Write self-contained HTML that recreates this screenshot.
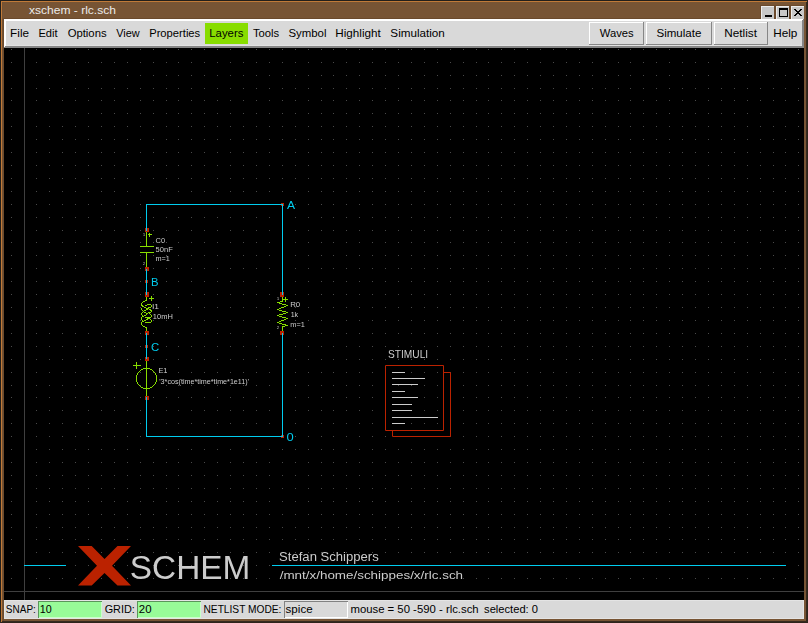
<!DOCTYPE html>
<html><head><meta charset="utf-8"><title>xschem - rlc.sch</title>
<style>html,body{margin:0;padding:0;background:#000;overflow:hidden}
svg{display:block} text{font-family:"Liberation Sans",sans-serif;white-space:pre}
rect{shape-rendering:crispEdges}</style></head>
<body><svg width="808" height="623" viewBox="0 0 808 623"><defs><filter id="gs" x="0" y="0" width="1" height="1"><feOffset dx="0" dy="0"/></filter></defs><rect x="0" y="0" width="808" height="623" fill="#775434"/><rect x="0" y="0" width="808" height="1" fill="#231f1b"/><rect x="0" y="0" width="1" height="623" fill="#231f1b"/><rect x="806" y="0" width="1" height="623" fill="#362a1f"/><rect x="807" y="0" width="1" height="623" fill="#2e241b"/><rect x="0" y="621" width="808" height="1" fill="#362a1f"/><rect x="0" y="622" width="808" height="1" fill="#2e241b"/><rect x="1" y="1" width="806" height="1" fill="#c07a38"/><rect x="1" y="1" width="1" height="621" fill="#c07a38"/><rect x="2" y="2" width="1" height="619" fill="#735234"/><rect x="3" y="18" width="801" height="1" fill="#6b4a2c"/><rect x="3" y="18" width="1" height="603" fill="#6b4a2c"/><text x="28.96" y="14" font-size="11" textLength="87.02" lengthAdjust="spacingAndGlyphs" fill="#ebebeb">xschem - rlc.sch</text><rect x="760" y="5" width="44" height="1" fill="#6b4a2c"/><rect x="761" y="6" width="13" height="14" fill="#c8c8c8"/><rect x="761" y="6" width="13" height="1" fill="#ececec"/><rect x="761" y="6" width="1" height="14" fill="#ececec"/><rect x="760" y="5" width="1" height="14" fill="#6b4a2c"/><rect x="776" y="6" width="13" height="14" fill="#c8c8c8"/><rect x="776" y="6" width="13" height="1" fill="#ececec"/><rect x="776" y="6" width="1" height="14" fill="#ececec"/><rect x="775" y="5" width="1" height="14" fill="#6b4a2c"/><rect x="791" y="6" width="13" height="14" fill="#c8c8c8"/><rect x="791" y="6" width="13" height="1" fill="#ececec"/><rect x="791" y="6" width="1" height="14" fill="#ececec"/><rect x="790" y="5" width="1" height="14" fill="#6b4a2c"/><rect x="774" y="6" width="1" height="13" fill="#6b4a2c"/><rect x="789" y="6" width="1" height="13" fill="#6b4a2c"/><rect x="765" y="15" width="7" height="2" fill="#000"/><rect x="779" y="8" width="9" height="2" fill="#000"/><rect x="779" y="8" width="1" height="9" fill="#000"/><rect x="787" y="8" width="1" height="9" fill="#000"/><rect x="779" y="16" width="9" height="1" fill="#000"/><path d="M794,9h1v1h-1zM794,15h1v1h-1zM795,9h1v1h-1zM795,10h1v1h-1zM795,14h1v1h-1zM795,15h1v1h-1zM796,10h1v1h-1zM796,11h1v1h-1zM796,13h1v1h-1zM796,14h1v1h-1zM797,11h1v1h-1zM797,12h1v1h-1zM797,13h1v1h-1zM798,11h1v1h-1zM798,12h1v1h-1zM798,13h1v1h-1zM799,10h1v1h-1zM799,11h1v1h-1zM799,13h1v1h-1zM799,14h1v1h-1zM800,9h1v1h-1zM800,10h1v1h-1zM800,14h1v1h-1zM800,15h1v1h-1zM801,9h1v1h-1zM801,15h1v1h-1z" fill="#000"/><rect x="4" y="19" width="800" height="29" fill="#d9d9d9"/><rect x="4" y="19" width="800" height="1" fill="#ffffff"/><rect x="4" y="20" width="800" height="1" fill="#ffffff"/><rect x="4" y="19" width="1" height="29" fill="#ffffff"/><rect x="5" y="19" width="1" height="28" fill="#ffffff"/><rect x="6" y="45" width="798" height="1" fill="#e2e2e2"/><rect x="5" y="46" width="799" height="1" fill="#868686"/><rect x="4" y="47" width="800" height="1" fill="#868686"/><rect x="802" y="20" width="1" height="28" fill="#868686"/><rect x="803" y="19" width="1" height="29" fill="#868686"/><rect x="205" y="23" width="43" height="21" fill="#88dd00"/><text x="10.14" y="37" font-size="11.6" textLength="18.88" lengthAdjust="spacingAndGlyphs" fill="#000">File</text><text x="38.49" y="37" font-size="11.6" textLength="19.09" lengthAdjust="spacingAndGlyphs" fill="#000">Edit</text><text x="67.66" y="37" font-size="11.6" textLength="38.94" lengthAdjust="spacingAndGlyphs" fill="#000">Options</text><text x="116.15" y="37" font-size="11.6" textLength="23.42" lengthAdjust="spacingAndGlyphs" fill="#000">View</text><text x="149.18" y="37" font-size="11.6" textLength="51.02" lengthAdjust="spacingAndGlyphs" fill="#000">Properties</text><text x="209.27" y="37" font-size="11.6" textLength="34.14" lengthAdjust="spacingAndGlyphs" fill="#000">Layers</text><text x="252.96" y="37" font-size="11.6" textLength="26.23" lengthAdjust="spacingAndGlyphs" fill="#000">Tools</text><text x="288.38" y="37" font-size="11.6" textLength="38.08" lengthAdjust="spacingAndGlyphs" fill="#000">Symbol</text><text x="335.34" y="37" font-size="11.6" textLength="45.44" lengthAdjust="spacingAndGlyphs" fill="#000">Highlight</text><text x="390.37" y="37" font-size="11.6" textLength="54.49" lengthAdjust="spacingAndGlyphs" fill="#000">Simulation</text><rect x="589" y="22" width="55" height="23" fill="#d9d9d9"/><rect x="589" y="22" width="55" height="1" fill="#ffffff"/><rect x="589" y="22" width="1" height="23" fill="#ffffff"/><rect x="589" y="44" width="55" height="1" fill="#868686"/><rect x="643" y="22" width="1" height="23" fill="#868686"/><text x="599.85" y="37" font-size="11.6" textLength="33.85" lengthAdjust="spacingAndGlyphs" fill="#000">Waves</text><rect x="646" y="22" width="66" height="23" fill="#d9d9d9"/><rect x="646" y="22" width="66" height="1" fill="#ffffff"/><rect x="646" y="22" width="1" height="23" fill="#ffffff"/><rect x="646" y="44" width="66" height="1" fill="#868686"/><rect x="711" y="22" width="1" height="23" fill="#868686"/><text x="656.48" y="37" font-size="11.6" textLength="44.94" lengthAdjust="spacingAndGlyphs" fill="#000">Simulate</text><rect x="714" y="22" width="54" height="23" fill="#d9d9d9"/><rect x="714" y="22" width="54" height="1" fill="#ffffff"/><rect x="714" y="22" width="1" height="23" fill="#ffffff"/><rect x="714" y="44" width="54" height="1" fill="#868686"/><rect x="767" y="22" width="1" height="23" fill="#868686"/><text x="724.34" y="37" font-size="11.6" textLength="32.65" lengthAdjust="spacingAndGlyphs" fill="#000">Netlist</text><text x="773.24" y="37" font-size="11.6" textLength="24.16" lengthAdjust="spacingAndGlyphs" fill="#000">Help</text><rect x="4" y="48" width="800" height="552" fill="#000"/><path d="M11,591h1v1h-1zM11,578h1v1h-1zM11,565h1v1h-1zM11,552h1v1h-1zM11,539h1v1h-1zM11,527h1v1h-1zM11,514h1v1h-1zM11,501h1v1h-1zM11,488h1v1h-1zM11,475h1v1h-1zM11,462h1v1h-1zM11,449h1v1h-1zM11,436h1v1h-1zM11,423h1v1h-1zM11,410h1v1h-1zM11,397h1v1h-1zM11,385h1v1h-1zM11,372h1v1h-1zM11,359h1v1h-1zM11,346h1v1h-1zM11,333h1v1h-1zM11,320h1v1h-1zM11,307h1v1h-1zM11,294h1v1h-1zM11,281h1v1h-1zM11,268h1v1h-1zM11,255h1v1h-1zM11,242h1v1h-1zM11,230h1v1h-1zM11,217h1v1h-1zM11,204h1v1h-1zM11,191h1v1h-1zM11,178h1v1h-1zM11,165h1v1h-1zM11,152h1v1h-1zM11,139h1v1h-1zM11,126h1v1h-1zM11,113h1v1h-1zM11,100h1v1h-1zM11,88h1v1h-1zM11,75h1v1h-1zM11,62h1v1h-1zM11,49h1v1h-1zM24,591h1v1h-1zM24,578h1v1h-1zM24,565h1v1h-1zM24,552h1v1h-1zM24,539h1v1h-1zM24,527h1v1h-1zM24,514h1v1h-1zM24,501h1v1h-1zM24,488h1v1h-1zM24,475h1v1h-1zM24,462h1v1h-1zM24,449h1v1h-1zM24,436h1v1h-1zM24,423h1v1h-1zM24,410h1v1h-1zM24,397h1v1h-1zM24,385h1v1h-1zM24,372h1v1h-1zM24,359h1v1h-1zM24,346h1v1h-1zM24,333h1v1h-1zM24,320h1v1h-1zM24,307h1v1h-1zM24,294h1v1h-1zM24,281h1v1h-1zM24,268h1v1h-1zM24,255h1v1h-1zM24,242h1v1h-1zM24,230h1v1h-1zM24,217h1v1h-1zM24,204h1v1h-1zM24,191h1v1h-1zM24,178h1v1h-1zM24,165h1v1h-1zM24,152h1v1h-1zM24,139h1v1h-1zM24,126h1v1h-1zM24,113h1v1h-1zM24,100h1v1h-1zM24,88h1v1h-1zM24,75h1v1h-1zM24,62h1v1h-1zM24,49h1v1h-1zM36,591h1v1h-1zM36,578h1v1h-1zM36,565h1v1h-1zM36,552h1v1h-1zM36,539h1v1h-1zM36,527h1v1h-1zM36,514h1v1h-1zM36,501h1v1h-1zM36,488h1v1h-1zM36,475h1v1h-1zM36,462h1v1h-1zM36,449h1v1h-1zM36,436h1v1h-1zM36,423h1v1h-1zM36,410h1v1h-1zM36,397h1v1h-1zM36,385h1v1h-1zM36,372h1v1h-1zM36,359h1v1h-1zM36,346h1v1h-1zM36,333h1v1h-1zM36,320h1v1h-1zM36,307h1v1h-1zM36,294h1v1h-1zM36,281h1v1h-1zM36,268h1v1h-1zM36,255h1v1h-1zM36,242h1v1h-1zM36,230h1v1h-1zM36,217h1v1h-1zM36,204h1v1h-1zM36,191h1v1h-1zM36,178h1v1h-1zM36,165h1v1h-1zM36,152h1v1h-1zM36,139h1v1h-1zM36,126h1v1h-1zM36,113h1v1h-1zM36,100h1v1h-1zM36,88h1v1h-1zM36,75h1v1h-1zM36,62h1v1h-1zM36,49h1v1h-1zM49,591h1v1h-1zM49,578h1v1h-1zM49,565h1v1h-1zM49,552h1v1h-1zM49,539h1v1h-1zM49,527h1v1h-1zM49,514h1v1h-1zM49,501h1v1h-1zM49,488h1v1h-1zM49,475h1v1h-1zM49,462h1v1h-1zM49,449h1v1h-1zM49,436h1v1h-1zM49,423h1v1h-1zM49,410h1v1h-1zM49,397h1v1h-1zM49,385h1v1h-1zM49,372h1v1h-1zM49,359h1v1h-1zM49,346h1v1h-1zM49,333h1v1h-1zM49,320h1v1h-1zM49,307h1v1h-1zM49,294h1v1h-1zM49,281h1v1h-1zM49,268h1v1h-1zM49,255h1v1h-1zM49,242h1v1h-1zM49,230h1v1h-1zM49,217h1v1h-1zM49,204h1v1h-1zM49,191h1v1h-1zM49,178h1v1h-1zM49,165h1v1h-1zM49,152h1v1h-1zM49,139h1v1h-1zM49,126h1v1h-1zM49,113h1v1h-1zM49,100h1v1h-1zM49,88h1v1h-1zM49,75h1v1h-1zM49,62h1v1h-1zM49,49h1v1h-1zM62,591h1v1h-1zM62,578h1v1h-1zM62,565h1v1h-1zM62,552h1v1h-1zM62,539h1v1h-1zM62,527h1v1h-1zM62,514h1v1h-1zM62,501h1v1h-1zM62,488h1v1h-1zM62,475h1v1h-1zM62,462h1v1h-1zM62,449h1v1h-1zM62,436h1v1h-1zM62,423h1v1h-1zM62,410h1v1h-1zM62,397h1v1h-1zM62,385h1v1h-1zM62,372h1v1h-1zM62,359h1v1h-1zM62,346h1v1h-1zM62,333h1v1h-1zM62,320h1v1h-1zM62,307h1v1h-1zM62,294h1v1h-1zM62,281h1v1h-1zM62,268h1v1h-1zM62,255h1v1h-1zM62,242h1v1h-1zM62,230h1v1h-1zM62,217h1v1h-1zM62,204h1v1h-1zM62,191h1v1h-1zM62,178h1v1h-1zM62,165h1v1h-1zM62,152h1v1h-1zM62,139h1v1h-1zM62,126h1v1h-1zM62,113h1v1h-1zM62,100h1v1h-1zM62,88h1v1h-1zM62,75h1v1h-1zM62,62h1v1h-1zM62,49h1v1h-1zM75,591h1v1h-1zM75,578h1v1h-1zM75,565h1v1h-1zM75,552h1v1h-1zM75,539h1v1h-1zM75,527h1v1h-1zM75,514h1v1h-1zM75,501h1v1h-1zM75,488h1v1h-1zM75,475h1v1h-1zM75,462h1v1h-1zM75,449h1v1h-1zM75,436h1v1h-1zM75,423h1v1h-1zM75,410h1v1h-1zM75,397h1v1h-1zM75,385h1v1h-1zM75,372h1v1h-1zM75,359h1v1h-1zM75,346h1v1h-1zM75,333h1v1h-1zM75,320h1v1h-1zM75,307h1v1h-1zM75,294h1v1h-1zM75,281h1v1h-1zM75,268h1v1h-1zM75,255h1v1h-1zM75,242h1v1h-1zM75,230h1v1h-1zM75,217h1v1h-1zM75,204h1v1h-1zM75,191h1v1h-1zM75,178h1v1h-1zM75,165h1v1h-1zM75,152h1v1h-1zM75,139h1v1h-1zM75,126h1v1h-1zM75,113h1v1h-1zM75,100h1v1h-1zM75,88h1v1h-1zM75,75h1v1h-1zM75,62h1v1h-1zM75,49h1v1h-1zM88,591h1v1h-1zM88,578h1v1h-1zM88,565h1v1h-1zM88,552h1v1h-1zM88,539h1v1h-1zM88,527h1v1h-1zM88,514h1v1h-1zM88,501h1v1h-1zM88,488h1v1h-1zM88,475h1v1h-1zM88,462h1v1h-1zM88,449h1v1h-1zM88,436h1v1h-1zM88,423h1v1h-1zM88,410h1v1h-1zM88,397h1v1h-1zM88,385h1v1h-1zM88,372h1v1h-1zM88,359h1v1h-1zM88,346h1v1h-1zM88,333h1v1h-1zM88,320h1v1h-1zM88,307h1v1h-1zM88,294h1v1h-1zM88,281h1v1h-1zM88,268h1v1h-1zM88,255h1v1h-1zM88,242h1v1h-1zM88,230h1v1h-1zM88,217h1v1h-1zM88,204h1v1h-1zM88,191h1v1h-1zM88,178h1v1h-1zM88,165h1v1h-1zM88,152h1v1h-1zM88,139h1v1h-1zM88,126h1v1h-1zM88,113h1v1h-1zM88,100h1v1h-1zM88,88h1v1h-1zM88,75h1v1h-1zM88,62h1v1h-1zM88,49h1v1h-1zM101,591h1v1h-1zM101,578h1v1h-1zM101,565h1v1h-1zM101,552h1v1h-1zM101,539h1v1h-1zM101,527h1v1h-1zM101,514h1v1h-1zM101,501h1v1h-1zM101,488h1v1h-1zM101,475h1v1h-1zM101,462h1v1h-1zM101,449h1v1h-1zM101,436h1v1h-1zM101,423h1v1h-1zM101,410h1v1h-1zM101,397h1v1h-1zM101,385h1v1h-1zM101,372h1v1h-1zM101,359h1v1h-1zM101,346h1v1h-1zM101,333h1v1h-1zM101,320h1v1h-1zM101,307h1v1h-1zM101,294h1v1h-1zM101,281h1v1h-1zM101,268h1v1h-1zM101,255h1v1h-1zM101,242h1v1h-1zM101,230h1v1h-1zM101,217h1v1h-1zM101,204h1v1h-1zM101,191h1v1h-1zM101,178h1v1h-1zM101,165h1v1h-1zM101,152h1v1h-1zM101,139h1v1h-1zM101,126h1v1h-1zM101,113h1v1h-1zM101,100h1v1h-1zM101,88h1v1h-1zM101,75h1v1h-1zM101,62h1v1h-1zM101,49h1v1h-1zM114,591h1v1h-1zM114,578h1v1h-1zM114,565h1v1h-1zM114,552h1v1h-1zM114,539h1v1h-1zM114,527h1v1h-1zM114,514h1v1h-1zM114,501h1v1h-1zM114,488h1v1h-1zM114,475h1v1h-1zM114,462h1v1h-1zM114,449h1v1h-1zM114,436h1v1h-1zM114,423h1v1h-1zM114,410h1v1h-1zM114,397h1v1h-1zM114,385h1v1h-1zM114,372h1v1h-1zM114,359h1v1h-1zM114,346h1v1h-1zM114,333h1v1h-1zM114,320h1v1h-1zM114,307h1v1h-1zM114,294h1v1h-1zM114,281h1v1h-1zM114,268h1v1h-1zM114,255h1v1h-1zM114,242h1v1h-1zM114,230h1v1h-1zM114,217h1v1h-1zM114,204h1v1h-1zM114,191h1v1h-1zM114,178h1v1h-1zM114,165h1v1h-1zM114,152h1v1h-1zM114,139h1v1h-1zM114,126h1v1h-1zM114,113h1v1h-1zM114,100h1v1h-1zM114,88h1v1h-1zM114,75h1v1h-1zM114,62h1v1h-1zM114,49h1v1h-1zM127,591h1v1h-1zM127,578h1v1h-1zM127,565h1v1h-1zM127,552h1v1h-1zM127,539h1v1h-1zM127,527h1v1h-1zM127,514h1v1h-1zM127,501h1v1h-1zM127,488h1v1h-1zM127,475h1v1h-1zM127,462h1v1h-1zM127,449h1v1h-1zM127,436h1v1h-1zM127,423h1v1h-1zM127,410h1v1h-1zM127,397h1v1h-1zM127,385h1v1h-1zM127,372h1v1h-1zM127,359h1v1h-1zM127,346h1v1h-1zM127,333h1v1h-1zM127,320h1v1h-1zM127,307h1v1h-1zM127,294h1v1h-1zM127,281h1v1h-1zM127,268h1v1h-1zM127,255h1v1h-1zM127,242h1v1h-1zM127,230h1v1h-1zM127,217h1v1h-1zM127,204h1v1h-1zM127,191h1v1h-1zM127,178h1v1h-1zM127,165h1v1h-1zM127,152h1v1h-1zM127,139h1v1h-1zM127,126h1v1h-1zM127,113h1v1h-1zM127,100h1v1h-1zM127,88h1v1h-1zM127,75h1v1h-1zM127,62h1v1h-1zM127,49h1v1h-1zM140,591h1v1h-1zM140,578h1v1h-1zM140,565h1v1h-1zM140,552h1v1h-1zM140,539h1v1h-1zM140,527h1v1h-1zM140,514h1v1h-1zM140,501h1v1h-1zM140,488h1v1h-1zM140,475h1v1h-1zM140,462h1v1h-1zM140,449h1v1h-1zM140,436h1v1h-1zM140,423h1v1h-1zM140,410h1v1h-1zM140,397h1v1h-1zM140,385h1v1h-1zM140,372h1v1h-1zM140,359h1v1h-1zM140,346h1v1h-1zM140,333h1v1h-1zM140,320h1v1h-1zM140,307h1v1h-1zM140,294h1v1h-1zM140,281h1v1h-1zM140,268h1v1h-1zM140,255h1v1h-1zM140,242h1v1h-1zM140,230h1v1h-1zM140,217h1v1h-1zM140,204h1v1h-1zM140,191h1v1h-1zM140,178h1v1h-1zM140,165h1v1h-1zM140,152h1v1h-1zM140,139h1v1h-1zM140,126h1v1h-1zM140,113h1v1h-1zM140,100h1v1h-1zM140,88h1v1h-1zM140,75h1v1h-1zM140,62h1v1h-1zM140,49h1v1h-1zM153,591h1v1h-1zM153,578h1v1h-1zM153,565h1v1h-1zM153,552h1v1h-1zM153,539h1v1h-1zM153,527h1v1h-1zM153,514h1v1h-1zM153,501h1v1h-1zM153,488h1v1h-1zM153,475h1v1h-1zM153,462h1v1h-1zM153,449h1v1h-1zM153,436h1v1h-1zM153,423h1v1h-1zM153,410h1v1h-1zM153,397h1v1h-1zM153,385h1v1h-1zM153,372h1v1h-1zM153,359h1v1h-1zM153,346h1v1h-1zM153,333h1v1h-1zM153,320h1v1h-1zM153,307h1v1h-1zM153,294h1v1h-1zM153,281h1v1h-1zM153,268h1v1h-1zM153,255h1v1h-1zM153,242h1v1h-1zM153,230h1v1h-1zM153,217h1v1h-1zM153,204h1v1h-1zM153,191h1v1h-1zM153,178h1v1h-1zM153,165h1v1h-1zM153,152h1v1h-1zM153,139h1v1h-1zM153,126h1v1h-1zM153,113h1v1h-1zM153,100h1v1h-1zM153,88h1v1h-1zM153,75h1v1h-1zM153,62h1v1h-1zM153,49h1v1h-1zM166,591h1v1h-1zM166,578h1v1h-1zM166,565h1v1h-1zM166,552h1v1h-1zM166,539h1v1h-1zM166,527h1v1h-1zM166,514h1v1h-1zM166,501h1v1h-1zM166,488h1v1h-1zM166,475h1v1h-1zM166,462h1v1h-1zM166,449h1v1h-1zM166,436h1v1h-1zM166,423h1v1h-1zM166,410h1v1h-1zM166,397h1v1h-1zM166,385h1v1h-1zM166,372h1v1h-1zM166,359h1v1h-1zM166,346h1v1h-1zM166,333h1v1h-1zM166,320h1v1h-1zM166,307h1v1h-1zM166,294h1v1h-1zM166,281h1v1h-1zM166,268h1v1h-1zM166,255h1v1h-1zM166,242h1v1h-1zM166,230h1v1h-1zM166,217h1v1h-1zM166,204h1v1h-1zM166,191h1v1h-1zM166,178h1v1h-1zM166,165h1v1h-1zM166,152h1v1h-1zM166,139h1v1h-1zM166,126h1v1h-1zM166,113h1v1h-1zM166,100h1v1h-1zM166,88h1v1h-1zM166,75h1v1h-1zM166,62h1v1h-1zM166,49h1v1h-1zM178,591h1v1h-1zM178,578h1v1h-1zM178,565h1v1h-1zM178,552h1v1h-1zM178,539h1v1h-1zM178,527h1v1h-1zM178,514h1v1h-1zM178,501h1v1h-1zM178,488h1v1h-1zM178,475h1v1h-1zM178,462h1v1h-1zM178,449h1v1h-1zM178,436h1v1h-1zM178,423h1v1h-1zM178,410h1v1h-1zM178,397h1v1h-1zM178,385h1v1h-1zM178,372h1v1h-1zM178,359h1v1h-1zM178,346h1v1h-1zM178,333h1v1h-1zM178,320h1v1h-1zM178,307h1v1h-1zM178,294h1v1h-1zM178,281h1v1h-1zM178,268h1v1h-1zM178,255h1v1h-1zM178,242h1v1h-1zM178,230h1v1h-1zM178,217h1v1h-1zM178,204h1v1h-1zM178,191h1v1h-1zM178,178h1v1h-1zM178,165h1v1h-1zM178,152h1v1h-1zM178,139h1v1h-1zM178,126h1v1h-1zM178,113h1v1h-1zM178,100h1v1h-1zM178,88h1v1h-1zM178,75h1v1h-1zM178,62h1v1h-1zM178,49h1v1h-1zM191,591h1v1h-1zM191,578h1v1h-1zM191,565h1v1h-1zM191,552h1v1h-1zM191,539h1v1h-1zM191,527h1v1h-1zM191,514h1v1h-1zM191,501h1v1h-1zM191,488h1v1h-1zM191,475h1v1h-1zM191,462h1v1h-1zM191,449h1v1h-1zM191,436h1v1h-1zM191,423h1v1h-1zM191,410h1v1h-1zM191,397h1v1h-1zM191,385h1v1h-1zM191,372h1v1h-1zM191,359h1v1h-1zM191,346h1v1h-1zM191,333h1v1h-1zM191,320h1v1h-1zM191,307h1v1h-1zM191,294h1v1h-1zM191,281h1v1h-1zM191,268h1v1h-1zM191,255h1v1h-1zM191,242h1v1h-1zM191,230h1v1h-1zM191,217h1v1h-1zM191,204h1v1h-1zM191,191h1v1h-1zM191,178h1v1h-1zM191,165h1v1h-1zM191,152h1v1h-1zM191,139h1v1h-1zM191,126h1v1h-1zM191,113h1v1h-1zM191,100h1v1h-1zM191,88h1v1h-1zM191,75h1v1h-1zM191,62h1v1h-1zM191,49h1v1h-1zM204,591h1v1h-1zM204,578h1v1h-1zM204,565h1v1h-1zM204,552h1v1h-1zM204,539h1v1h-1zM204,527h1v1h-1zM204,514h1v1h-1zM204,501h1v1h-1zM204,488h1v1h-1zM204,475h1v1h-1zM204,462h1v1h-1zM204,449h1v1h-1zM204,436h1v1h-1zM204,423h1v1h-1zM204,410h1v1h-1zM204,397h1v1h-1zM204,385h1v1h-1zM204,372h1v1h-1zM204,359h1v1h-1zM204,346h1v1h-1zM204,333h1v1h-1zM204,320h1v1h-1zM204,307h1v1h-1zM204,294h1v1h-1zM204,281h1v1h-1zM204,268h1v1h-1zM204,255h1v1h-1zM204,242h1v1h-1zM204,230h1v1h-1zM204,217h1v1h-1zM204,204h1v1h-1zM204,191h1v1h-1zM204,178h1v1h-1zM204,165h1v1h-1zM204,152h1v1h-1zM204,139h1v1h-1zM204,126h1v1h-1zM204,113h1v1h-1zM204,100h1v1h-1zM204,88h1v1h-1zM204,75h1v1h-1zM204,62h1v1h-1zM204,49h1v1h-1zM217,591h1v1h-1zM217,578h1v1h-1zM217,565h1v1h-1zM217,552h1v1h-1zM217,539h1v1h-1zM217,527h1v1h-1zM217,514h1v1h-1zM217,501h1v1h-1zM217,488h1v1h-1zM217,475h1v1h-1zM217,462h1v1h-1zM217,449h1v1h-1zM217,436h1v1h-1zM217,423h1v1h-1zM217,410h1v1h-1zM217,397h1v1h-1zM217,385h1v1h-1zM217,372h1v1h-1zM217,359h1v1h-1zM217,346h1v1h-1zM217,333h1v1h-1zM217,320h1v1h-1zM217,307h1v1h-1zM217,294h1v1h-1zM217,281h1v1h-1zM217,268h1v1h-1zM217,255h1v1h-1zM217,242h1v1h-1zM217,230h1v1h-1zM217,217h1v1h-1zM217,204h1v1h-1zM217,191h1v1h-1zM217,178h1v1h-1zM217,165h1v1h-1zM217,152h1v1h-1zM217,139h1v1h-1zM217,126h1v1h-1zM217,113h1v1h-1zM217,100h1v1h-1zM217,88h1v1h-1zM217,75h1v1h-1zM217,62h1v1h-1zM217,49h1v1h-1zM230,591h1v1h-1zM230,578h1v1h-1zM230,565h1v1h-1zM230,552h1v1h-1zM230,539h1v1h-1zM230,527h1v1h-1zM230,514h1v1h-1zM230,501h1v1h-1zM230,488h1v1h-1zM230,475h1v1h-1zM230,462h1v1h-1zM230,449h1v1h-1zM230,436h1v1h-1zM230,423h1v1h-1zM230,410h1v1h-1zM230,397h1v1h-1zM230,385h1v1h-1zM230,372h1v1h-1zM230,359h1v1h-1zM230,346h1v1h-1zM230,333h1v1h-1zM230,320h1v1h-1zM230,307h1v1h-1zM230,294h1v1h-1zM230,281h1v1h-1zM230,268h1v1h-1zM230,255h1v1h-1zM230,242h1v1h-1zM230,230h1v1h-1zM230,217h1v1h-1zM230,204h1v1h-1zM230,191h1v1h-1zM230,178h1v1h-1zM230,165h1v1h-1zM230,152h1v1h-1zM230,139h1v1h-1zM230,126h1v1h-1zM230,113h1v1h-1zM230,100h1v1h-1zM230,88h1v1h-1zM230,75h1v1h-1zM230,62h1v1h-1zM230,49h1v1h-1zM243,591h1v1h-1zM243,578h1v1h-1zM243,565h1v1h-1zM243,552h1v1h-1zM243,539h1v1h-1zM243,527h1v1h-1zM243,514h1v1h-1zM243,501h1v1h-1zM243,488h1v1h-1zM243,475h1v1h-1zM243,462h1v1h-1zM243,449h1v1h-1zM243,436h1v1h-1zM243,423h1v1h-1zM243,410h1v1h-1zM243,397h1v1h-1zM243,385h1v1h-1zM243,372h1v1h-1zM243,359h1v1h-1zM243,346h1v1h-1zM243,333h1v1h-1zM243,320h1v1h-1zM243,307h1v1h-1zM243,294h1v1h-1zM243,281h1v1h-1zM243,268h1v1h-1zM243,255h1v1h-1zM243,242h1v1h-1zM243,230h1v1h-1zM243,217h1v1h-1zM243,204h1v1h-1zM243,191h1v1h-1zM243,178h1v1h-1zM243,165h1v1h-1zM243,152h1v1h-1zM243,139h1v1h-1zM243,126h1v1h-1zM243,113h1v1h-1zM243,100h1v1h-1zM243,88h1v1h-1zM243,75h1v1h-1zM243,62h1v1h-1zM243,49h1v1h-1zM256,591h1v1h-1zM256,578h1v1h-1zM256,565h1v1h-1zM256,552h1v1h-1zM256,539h1v1h-1zM256,527h1v1h-1zM256,514h1v1h-1zM256,501h1v1h-1zM256,488h1v1h-1zM256,475h1v1h-1zM256,462h1v1h-1zM256,449h1v1h-1zM256,436h1v1h-1zM256,423h1v1h-1zM256,410h1v1h-1zM256,397h1v1h-1zM256,385h1v1h-1zM256,372h1v1h-1zM256,359h1v1h-1zM256,346h1v1h-1zM256,333h1v1h-1zM256,320h1v1h-1zM256,307h1v1h-1zM256,294h1v1h-1zM256,281h1v1h-1zM256,268h1v1h-1zM256,255h1v1h-1zM256,242h1v1h-1zM256,230h1v1h-1zM256,217h1v1h-1zM256,204h1v1h-1zM256,191h1v1h-1zM256,178h1v1h-1zM256,165h1v1h-1zM256,152h1v1h-1zM256,139h1v1h-1zM256,126h1v1h-1zM256,113h1v1h-1zM256,100h1v1h-1zM256,88h1v1h-1zM256,75h1v1h-1zM256,62h1v1h-1zM256,49h1v1h-1zM269,591h1v1h-1zM269,578h1v1h-1zM269,565h1v1h-1zM269,552h1v1h-1zM269,539h1v1h-1zM269,527h1v1h-1zM269,514h1v1h-1zM269,501h1v1h-1zM269,488h1v1h-1zM269,475h1v1h-1zM269,462h1v1h-1zM269,449h1v1h-1zM269,436h1v1h-1zM269,423h1v1h-1zM269,410h1v1h-1zM269,397h1v1h-1zM269,385h1v1h-1zM269,372h1v1h-1zM269,359h1v1h-1zM269,346h1v1h-1zM269,333h1v1h-1zM269,320h1v1h-1zM269,307h1v1h-1zM269,294h1v1h-1zM269,281h1v1h-1zM269,268h1v1h-1zM269,255h1v1h-1zM269,242h1v1h-1zM269,230h1v1h-1zM269,217h1v1h-1zM269,204h1v1h-1zM269,191h1v1h-1zM269,178h1v1h-1zM269,165h1v1h-1zM269,152h1v1h-1zM269,139h1v1h-1zM269,126h1v1h-1zM269,113h1v1h-1zM269,100h1v1h-1zM269,88h1v1h-1zM269,75h1v1h-1zM269,62h1v1h-1zM269,49h1v1h-1zM282,591h1v1h-1zM282,578h1v1h-1zM282,565h1v1h-1zM282,552h1v1h-1zM282,539h1v1h-1zM282,527h1v1h-1zM282,514h1v1h-1zM282,501h1v1h-1zM282,488h1v1h-1zM282,475h1v1h-1zM282,462h1v1h-1zM282,449h1v1h-1zM282,436h1v1h-1zM282,423h1v1h-1zM282,410h1v1h-1zM282,397h1v1h-1zM282,385h1v1h-1zM282,372h1v1h-1zM282,359h1v1h-1zM282,346h1v1h-1zM282,333h1v1h-1zM282,320h1v1h-1zM282,307h1v1h-1zM282,294h1v1h-1zM282,281h1v1h-1zM282,268h1v1h-1zM282,255h1v1h-1zM282,242h1v1h-1zM282,230h1v1h-1zM282,217h1v1h-1zM282,204h1v1h-1zM282,191h1v1h-1zM282,178h1v1h-1zM282,165h1v1h-1zM282,152h1v1h-1zM282,139h1v1h-1zM282,126h1v1h-1zM282,113h1v1h-1zM282,100h1v1h-1zM282,88h1v1h-1zM282,75h1v1h-1zM282,62h1v1h-1zM282,49h1v1h-1zM295,591h1v1h-1zM295,578h1v1h-1zM295,565h1v1h-1zM295,552h1v1h-1zM295,539h1v1h-1zM295,527h1v1h-1zM295,514h1v1h-1zM295,501h1v1h-1zM295,488h1v1h-1zM295,475h1v1h-1zM295,462h1v1h-1zM295,449h1v1h-1zM295,436h1v1h-1zM295,423h1v1h-1zM295,410h1v1h-1zM295,397h1v1h-1zM295,385h1v1h-1zM295,372h1v1h-1zM295,359h1v1h-1zM295,346h1v1h-1zM295,333h1v1h-1zM295,320h1v1h-1zM295,307h1v1h-1zM295,294h1v1h-1zM295,281h1v1h-1zM295,268h1v1h-1zM295,255h1v1h-1zM295,242h1v1h-1zM295,230h1v1h-1zM295,217h1v1h-1zM295,204h1v1h-1zM295,191h1v1h-1zM295,178h1v1h-1zM295,165h1v1h-1zM295,152h1v1h-1zM295,139h1v1h-1zM295,126h1v1h-1zM295,113h1v1h-1zM295,100h1v1h-1zM295,88h1v1h-1zM295,75h1v1h-1zM295,62h1v1h-1zM295,49h1v1h-1zM308,591h1v1h-1zM308,578h1v1h-1zM308,565h1v1h-1zM308,552h1v1h-1zM308,539h1v1h-1zM308,527h1v1h-1zM308,514h1v1h-1zM308,501h1v1h-1zM308,488h1v1h-1zM308,475h1v1h-1zM308,462h1v1h-1zM308,449h1v1h-1zM308,436h1v1h-1zM308,423h1v1h-1zM308,410h1v1h-1zM308,397h1v1h-1zM308,385h1v1h-1zM308,372h1v1h-1zM308,359h1v1h-1zM308,346h1v1h-1zM308,333h1v1h-1zM308,320h1v1h-1zM308,307h1v1h-1zM308,294h1v1h-1zM308,281h1v1h-1zM308,268h1v1h-1zM308,255h1v1h-1zM308,242h1v1h-1zM308,230h1v1h-1zM308,217h1v1h-1zM308,204h1v1h-1zM308,191h1v1h-1zM308,178h1v1h-1zM308,165h1v1h-1zM308,152h1v1h-1zM308,139h1v1h-1zM308,126h1v1h-1zM308,113h1v1h-1zM308,100h1v1h-1zM308,88h1v1h-1zM308,75h1v1h-1zM308,62h1v1h-1zM308,49h1v1h-1zM321,591h1v1h-1zM321,578h1v1h-1zM321,565h1v1h-1zM321,552h1v1h-1zM321,539h1v1h-1zM321,527h1v1h-1zM321,514h1v1h-1zM321,501h1v1h-1zM321,488h1v1h-1zM321,475h1v1h-1zM321,462h1v1h-1zM321,449h1v1h-1zM321,436h1v1h-1zM321,423h1v1h-1zM321,410h1v1h-1zM321,397h1v1h-1zM321,385h1v1h-1zM321,372h1v1h-1zM321,359h1v1h-1zM321,346h1v1h-1zM321,333h1v1h-1zM321,320h1v1h-1zM321,307h1v1h-1zM321,294h1v1h-1zM321,281h1v1h-1zM321,268h1v1h-1zM321,255h1v1h-1zM321,242h1v1h-1zM321,230h1v1h-1zM321,217h1v1h-1zM321,204h1v1h-1zM321,191h1v1h-1zM321,178h1v1h-1zM321,165h1v1h-1zM321,152h1v1h-1zM321,139h1v1h-1zM321,126h1v1h-1zM321,113h1v1h-1zM321,100h1v1h-1zM321,88h1v1h-1zM321,75h1v1h-1zM321,62h1v1h-1zM321,49h1v1h-1zM333,591h1v1h-1zM333,578h1v1h-1zM333,565h1v1h-1zM333,552h1v1h-1zM333,539h1v1h-1zM333,527h1v1h-1zM333,514h1v1h-1zM333,501h1v1h-1zM333,488h1v1h-1zM333,475h1v1h-1zM333,462h1v1h-1zM333,449h1v1h-1zM333,436h1v1h-1zM333,423h1v1h-1zM333,410h1v1h-1zM333,397h1v1h-1zM333,385h1v1h-1zM333,372h1v1h-1zM333,359h1v1h-1zM333,346h1v1h-1zM333,333h1v1h-1zM333,320h1v1h-1zM333,307h1v1h-1zM333,294h1v1h-1zM333,281h1v1h-1zM333,268h1v1h-1zM333,255h1v1h-1zM333,242h1v1h-1zM333,230h1v1h-1zM333,217h1v1h-1zM333,204h1v1h-1zM333,191h1v1h-1zM333,178h1v1h-1zM333,165h1v1h-1zM333,152h1v1h-1zM333,139h1v1h-1zM333,126h1v1h-1zM333,113h1v1h-1zM333,100h1v1h-1zM333,88h1v1h-1zM333,75h1v1h-1zM333,62h1v1h-1zM333,49h1v1h-1zM346,591h1v1h-1zM346,578h1v1h-1zM346,565h1v1h-1zM346,552h1v1h-1zM346,539h1v1h-1zM346,527h1v1h-1zM346,514h1v1h-1zM346,501h1v1h-1zM346,488h1v1h-1zM346,475h1v1h-1zM346,462h1v1h-1zM346,449h1v1h-1zM346,436h1v1h-1zM346,423h1v1h-1zM346,410h1v1h-1zM346,397h1v1h-1zM346,385h1v1h-1zM346,372h1v1h-1zM346,359h1v1h-1zM346,346h1v1h-1zM346,333h1v1h-1zM346,320h1v1h-1zM346,307h1v1h-1zM346,294h1v1h-1zM346,281h1v1h-1zM346,268h1v1h-1zM346,255h1v1h-1zM346,242h1v1h-1zM346,230h1v1h-1zM346,217h1v1h-1zM346,204h1v1h-1zM346,191h1v1h-1zM346,178h1v1h-1zM346,165h1v1h-1zM346,152h1v1h-1zM346,139h1v1h-1zM346,126h1v1h-1zM346,113h1v1h-1zM346,100h1v1h-1zM346,88h1v1h-1zM346,75h1v1h-1zM346,62h1v1h-1zM346,49h1v1h-1zM359,591h1v1h-1zM359,578h1v1h-1zM359,565h1v1h-1zM359,552h1v1h-1zM359,539h1v1h-1zM359,527h1v1h-1zM359,514h1v1h-1zM359,501h1v1h-1zM359,488h1v1h-1zM359,475h1v1h-1zM359,462h1v1h-1zM359,449h1v1h-1zM359,436h1v1h-1zM359,423h1v1h-1zM359,410h1v1h-1zM359,397h1v1h-1zM359,385h1v1h-1zM359,372h1v1h-1zM359,359h1v1h-1zM359,346h1v1h-1zM359,333h1v1h-1zM359,320h1v1h-1zM359,307h1v1h-1zM359,294h1v1h-1zM359,281h1v1h-1zM359,268h1v1h-1zM359,255h1v1h-1zM359,242h1v1h-1zM359,230h1v1h-1zM359,217h1v1h-1zM359,204h1v1h-1zM359,191h1v1h-1zM359,178h1v1h-1zM359,165h1v1h-1zM359,152h1v1h-1zM359,139h1v1h-1zM359,126h1v1h-1zM359,113h1v1h-1zM359,100h1v1h-1zM359,88h1v1h-1zM359,75h1v1h-1zM359,62h1v1h-1zM359,49h1v1h-1zM372,591h1v1h-1zM372,578h1v1h-1zM372,565h1v1h-1zM372,552h1v1h-1zM372,539h1v1h-1zM372,527h1v1h-1zM372,514h1v1h-1zM372,501h1v1h-1zM372,488h1v1h-1zM372,475h1v1h-1zM372,462h1v1h-1zM372,449h1v1h-1zM372,436h1v1h-1zM372,423h1v1h-1zM372,410h1v1h-1zM372,397h1v1h-1zM372,385h1v1h-1zM372,372h1v1h-1zM372,359h1v1h-1zM372,346h1v1h-1zM372,333h1v1h-1zM372,320h1v1h-1zM372,307h1v1h-1zM372,294h1v1h-1zM372,281h1v1h-1zM372,268h1v1h-1zM372,255h1v1h-1zM372,242h1v1h-1zM372,230h1v1h-1zM372,217h1v1h-1zM372,204h1v1h-1zM372,191h1v1h-1zM372,178h1v1h-1zM372,165h1v1h-1zM372,152h1v1h-1zM372,139h1v1h-1zM372,126h1v1h-1zM372,113h1v1h-1zM372,100h1v1h-1zM372,88h1v1h-1zM372,75h1v1h-1zM372,62h1v1h-1zM372,49h1v1h-1zM385,591h1v1h-1zM385,578h1v1h-1zM385,565h1v1h-1zM385,552h1v1h-1zM385,539h1v1h-1zM385,527h1v1h-1zM385,514h1v1h-1zM385,501h1v1h-1zM385,488h1v1h-1zM385,475h1v1h-1zM385,462h1v1h-1zM385,449h1v1h-1zM385,436h1v1h-1zM385,423h1v1h-1zM385,410h1v1h-1zM385,397h1v1h-1zM385,385h1v1h-1zM385,372h1v1h-1zM385,359h1v1h-1zM385,346h1v1h-1zM385,333h1v1h-1zM385,320h1v1h-1zM385,307h1v1h-1zM385,294h1v1h-1zM385,281h1v1h-1zM385,268h1v1h-1zM385,255h1v1h-1zM385,242h1v1h-1zM385,230h1v1h-1zM385,217h1v1h-1zM385,204h1v1h-1zM385,191h1v1h-1zM385,178h1v1h-1zM385,165h1v1h-1zM385,152h1v1h-1zM385,139h1v1h-1zM385,126h1v1h-1zM385,113h1v1h-1zM385,100h1v1h-1zM385,88h1v1h-1zM385,75h1v1h-1zM385,62h1v1h-1zM385,49h1v1h-1zM398,591h1v1h-1zM398,578h1v1h-1zM398,565h1v1h-1zM398,552h1v1h-1zM398,539h1v1h-1zM398,527h1v1h-1zM398,514h1v1h-1zM398,501h1v1h-1zM398,488h1v1h-1zM398,475h1v1h-1zM398,462h1v1h-1zM398,449h1v1h-1zM398,436h1v1h-1zM398,423h1v1h-1zM398,410h1v1h-1zM398,397h1v1h-1zM398,385h1v1h-1zM398,372h1v1h-1zM398,359h1v1h-1zM398,346h1v1h-1zM398,333h1v1h-1zM398,320h1v1h-1zM398,307h1v1h-1zM398,294h1v1h-1zM398,281h1v1h-1zM398,268h1v1h-1zM398,255h1v1h-1zM398,242h1v1h-1zM398,230h1v1h-1zM398,217h1v1h-1zM398,204h1v1h-1zM398,191h1v1h-1zM398,178h1v1h-1zM398,165h1v1h-1zM398,152h1v1h-1zM398,139h1v1h-1zM398,126h1v1h-1zM398,113h1v1h-1zM398,100h1v1h-1zM398,88h1v1h-1zM398,75h1v1h-1zM398,62h1v1h-1zM398,49h1v1h-1zM411,591h1v1h-1zM411,578h1v1h-1zM411,565h1v1h-1zM411,552h1v1h-1zM411,539h1v1h-1zM411,527h1v1h-1zM411,514h1v1h-1zM411,501h1v1h-1zM411,488h1v1h-1zM411,475h1v1h-1zM411,462h1v1h-1zM411,449h1v1h-1zM411,436h1v1h-1zM411,423h1v1h-1zM411,410h1v1h-1zM411,397h1v1h-1zM411,385h1v1h-1zM411,372h1v1h-1zM411,359h1v1h-1zM411,346h1v1h-1zM411,333h1v1h-1zM411,320h1v1h-1zM411,307h1v1h-1zM411,294h1v1h-1zM411,281h1v1h-1zM411,268h1v1h-1zM411,255h1v1h-1zM411,242h1v1h-1zM411,230h1v1h-1zM411,217h1v1h-1zM411,204h1v1h-1zM411,191h1v1h-1zM411,178h1v1h-1zM411,165h1v1h-1zM411,152h1v1h-1zM411,139h1v1h-1zM411,126h1v1h-1zM411,113h1v1h-1zM411,100h1v1h-1zM411,88h1v1h-1zM411,75h1v1h-1zM411,62h1v1h-1zM411,49h1v1h-1zM424,591h1v1h-1zM424,578h1v1h-1zM424,565h1v1h-1zM424,552h1v1h-1zM424,539h1v1h-1zM424,527h1v1h-1zM424,514h1v1h-1zM424,501h1v1h-1zM424,488h1v1h-1zM424,475h1v1h-1zM424,462h1v1h-1zM424,449h1v1h-1zM424,436h1v1h-1zM424,423h1v1h-1zM424,410h1v1h-1zM424,397h1v1h-1zM424,385h1v1h-1zM424,372h1v1h-1zM424,359h1v1h-1zM424,346h1v1h-1zM424,333h1v1h-1zM424,320h1v1h-1zM424,307h1v1h-1zM424,294h1v1h-1zM424,281h1v1h-1zM424,268h1v1h-1zM424,255h1v1h-1zM424,242h1v1h-1zM424,230h1v1h-1zM424,217h1v1h-1zM424,204h1v1h-1zM424,191h1v1h-1zM424,178h1v1h-1zM424,165h1v1h-1zM424,152h1v1h-1zM424,139h1v1h-1zM424,126h1v1h-1zM424,113h1v1h-1zM424,100h1v1h-1zM424,88h1v1h-1zM424,75h1v1h-1zM424,62h1v1h-1zM424,49h1v1h-1zM437,591h1v1h-1zM437,578h1v1h-1zM437,565h1v1h-1zM437,552h1v1h-1zM437,539h1v1h-1zM437,527h1v1h-1zM437,514h1v1h-1zM437,501h1v1h-1zM437,488h1v1h-1zM437,475h1v1h-1zM437,462h1v1h-1zM437,449h1v1h-1zM437,436h1v1h-1zM437,423h1v1h-1zM437,410h1v1h-1zM437,397h1v1h-1zM437,385h1v1h-1zM437,372h1v1h-1zM437,359h1v1h-1zM437,346h1v1h-1zM437,333h1v1h-1zM437,320h1v1h-1zM437,307h1v1h-1zM437,294h1v1h-1zM437,281h1v1h-1zM437,268h1v1h-1zM437,255h1v1h-1zM437,242h1v1h-1zM437,230h1v1h-1zM437,217h1v1h-1zM437,204h1v1h-1zM437,191h1v1h-1zM437,178h1v1h-1zM437,165h1v1h-1zM437,152h1v1h-1zM437,139h1v1h-1zM437,126h1v1h-1zM437,113h1v1h-1zM437,100h1v1h-1zM437,88h1v1h-1zM437,75h1v1h-1zM437,62h1v1h-1zM437,49h1v1h-1zM450,591h1v1h-1zM450,578h1v1h-1zM450,565h1v1h-1zM450,552h1v1h-1zM450,539h1v1h-1zM450,527h1v1h-1zM450,514h1v1h-1zM450,501h1v1h-1zM450,488h1v1h-1zM450,475h1v1h-1zM450,462h1v1h-1zM450,449h1v1h-1zM450,436h1v1h-1zM450,423h1v1h-1zM450,410h1v1h-1zM450,397h1v1h-1zM450,385h1v1h-1zM450,372h1v1h-1zM450,359h1v1h-1zM450,346h1v1h-1zM450,333h1v1h-1zM450,320h1v1h-1zM450,307h1v1h-1zM450,294h1v1h-1zM450,281h1v1h-1zM450,268h1v1h-1zM450,255h1v1h-1zM450,242h1v1h-1zM450,230h1v1h-1zM450,217h1v1h-1zM450,204h1v1h-1zM450,191h1v1h-1zM450,178h1v1h-1zM450,165h1v1h-1zM450,152h1v1h-1zM450,139h1v1h-1zM450,126h1v1h-1zM450,113h1v1h-1zM450,100h1v1h-1zM450,88h1v1h-1zM450,75h1v1h-1zM450,62h1v1h-1zM450,49h1v1h-1zM463,591h1v1h-1zM463,578h1v1h-1zM463,565h1v1h-1zM463,552h1v1h-1zM463,539h1v1h-1zM463,527h1v1h-1zM463,514h1v1h-1zM463,501h1v1h-1zM463,488h1v1h-1zM463,475h1v1h-1zM463,462h1v1h-1zM463,449h1v1h-1zM463,436h1v1h-1zM463,423h1v1h-1zM463,410h1v1h-1zM463,397h1v1h-1zM463,385h1v1h-1zM463,372h1v1h-1zM463,359h1v1h-1zM463,346h1v1h-1zM463,333h1v1h-1zM463,320h1v1h-1zM463,307h1v1h-1zM463,294h1v1h-1zM463,281h1v1h-1zM463,268h1v1h-1zM463,255h1v1h-1zM463,242h1v1h-1zM463,230h1v1h-1zM463,217h1v1h-1zM463,204h1v1h-1zM463,191h1v1h-1zM463,178h1v1h-1zM463,165h1v1h-1zM463,152h1v1h-1zM463,139h1v1h-1zM463,126h1v1h-1zM463,113h1v1h-1zM463,100h1v1h-1zM463,88h1v1h-1zM463,75h1v1h-1zM463,62h1v1h-1zM463,49h1v1h-1zM476,591h1v1h-1zM476,578h1v1h-1zM476,565h1v1h-1zM476,552h1v1h-1zM476,539h1v1h-1zM476,527h1v1h-1zM476,514h1v1h-1zM476,501h1v1h-1zM476,488h1v1h-1zM476,475h1v1h-1zM476,462h1v1h-1zM476,449h1v1h-1zM476,436h1v1h-1zM476,423h1v1h-1zM476,410h1v1h-1zM476,397h1v1h-1zM476,385h1v1h-1zM476,372h1v1h-1zM476,359h1v1h-1zM476,346h1v1h-1zM476,333h1v1h-1zM476,320h1v1h-1zM476,307h1v1h-1zM476,294h1v1h-1zM476,281h1v1h-1zM476,268h1v1h-1zM476,255h1v1h-1zM476,242h1v1h-1zM476,230h1v1h-1zM476,217h1v1h-1zM476,204h1v1h-1zM476,191h1v1h-1zM476,178h1v1h-1zM476,165h1v1h-1zM476,152h1v1h-1zM476,139h1v1h-1zM476,126h1v1h-1zM476,113h1v1h-1zM476,100h1v1h-1zM476,88h1v1h-1zM476,75h1v1h-1zM476,62h1v1h-1zM476,49h1v1h-1zM488,591h1v1h-1zM488,578h1v1h-1zM488,565h1v1h-1zM488,552h1v1h-1zM488,539h1v1h-1zM488,527h1v1h-1zM488,514h1v1h-1zM488,501h1v1h-1zM488,488h1v1h-1zM488,475h1v1h-1zM488,462h1v1h-1zM488,449h1v1h-1zM488,436h1v1h-1zM488,423h1v1h-1zM488,410h1v1h-1zM488,397h1v1h-1zM488,385h1v1h-1zM488,372h1v1h-1zM488,359h1v1h-1zM488,346h1v1h-1zM488,333h1v1h-1zM488,320h1v1h-1zM488,307h1v1h-1zM488,294h1v1h-1zM488,281h1v1h-1zM488,268h1v1h-1zM488,255h1v1h-1zM488,242h1v1h-1zM488,230h1v1h-1zM488,217h1v1h-1zM488,204h1v1h-1zM488,191h1v1h-1zM488,178h1v1h-1zM488,165h1v1h-1zM488,152h1v1h-1zM488,139h1v1h-1zM488,126h1v1h-1zM488,113h1v1h-1zM488,100h1v1h-1zM488,88h1v1h-1zM488,75h1v1h-1zM488,62h1v1h-1zM488,49h1v1h-1zM501,591h1v1h-1zM501,578h1v1h-1zM501,565h1v1h-1zM501,552h1v1h-1zM501,539h1v1h-1zM501,527h1v1h-1zM501,514h1v1h-1zM501,501h1v1h-1zM501,488h1v1h-1zM501,475h1v1h-1zM501,462h1v1h-1zM501,449h1v1h-1zM501,436h1v1h-1zM501,423h1v1h-1zM501,410h1v1h-1zM501,397h1v1h-1zM501,385h1v1h-1zM501,372h1v1h-1zM501,359h1v1h-1zM501,346h1v1h-1zM501,333h1v1h-1zM501,320h1v1h-1zM501,307h1v1h-1zM501,294h1v1h-1zM501,281h1v1h-1zM501,268h1v1h-1zM501,255h1v1h-1zM501,242h1v1h-1zM501,230h1v1h-1zM501,217h1v1h-1zM501,204h1v1h-1zM501,191h1v1h-1zM501,178h1v1h-1zM501,165h1v1h-1zM501,152h1v1h-1zM501,139h1v1h-1zM501,126h1v1h-1zM501,113h1v1h-1zM501,100h1v1h-1zM501,88h1v1h-1zM501,75h1v1h-1zM501,62h1v1h-1zM501,49h1v1h-1zM514,591h1v1h-1zM514,578h1v1h-1zM514,565h1v1h-1zM514,552h1v1h-1zM514,539h1v1h-1zM514,527h1v1h-1zM514,514h1v1h-1zM514,501h1v1h-1zM514,488h1v1h-1zM514,475h1v1h-1zM514,462h1v1h-1zM514,449h1v1h-1zM514,436h1v1h-1zM514,423h1v1h-1zM514,410h1v1h-1zM514,397h1v1h-1zM514,385h1v1h-1zM514,372h1v1h-1zM514,359h1v1h-1zM514,346h1v1h-1zM514,333h1v1h-1zM514,320h1v1h-1zM514,307h1v1h-1zM514,294h1v1h-1zM514,281h1v1h-1zM514,268h1v1h-1zM514,255h1v1h-1zM514,242h1v1h-1zM514,230h1v1h-1zM514,217h1v1h-1zM514,204h1v1h-1zM514,191h1v1h-1zM514,178h1v1h-1zM514,165h1v1h-1zM514,152h1v1h-1zM514,139h1v1h-1zM514,126h1v1h-1zM514,113h1v1h-1zM514,100h1v1h-1zM514,88h1v1h-1zM514,75h1v1h-1zM514,62h1v1h-1zM514,49h1v1h-1zM527,591h1v1h-1zM527,578h1v1h-1zM527,565h1v1h-1zM527,552h1v1h-1zM527,539h1v1h-1zM527,527h1v1h-1zM527,514h1v1h-1zM527,501h1v1h-1zM527,488h1v1h-1zM527,475h1v1h-1zM527,462h1v1h-1zM527,449h1v1h-1zM527,436h1v1h-1zM527,423h1v1h-1zM527,410h1v1h-1zM527,397h1v1h-1zM527,385h1v1h-1zM527,372h1v1h-1zM527,359h1v1h-1zM527,346h1v1h-1zM527,333h1v1h-1zM527,320h1v1h-1zM527,307h1v1h-1zM527,294h1v1h-1zM527,281h1v1h-1zM527,268h1v1h-1zM527,255h1v1h-1zM527,242h1v1h-1zM527,230h1v1h-1zM527,217h1v1h-1zM527,204h1v1h-1zM527,191h1v1h-1zM527,178h1v1h-1zM527,165h1v1h-1zM527,152h1v1h-1zM527,139h1v1h-1zM527,126h1v1h-1zM527,113h1v1h-1zM527,100h1v1h-1zM527,88h1v1h-1zM527,75h1v1h-1zM527,62h1v1h-1zM527,49h1v1h-1zM540,591h1v1h-1zM540,578h1v1h-1zM540,565h1v1h-1zM540,552h1v1h-1zM540,539h1v1h-1zM540,527h1v1h-1zM540,514h1v1h-1zM540,501h1v1h-1zM540,488h1v1h-1zM540,475h1v1h-1zM540,462h1v1h-1zM540,449h1v1h-1zM540,436h1v1h-1zM540,423h1v1h-1zM540,410h1v1h-1zM540,397h1v1h-1zM540,385h1v1h-1zM540,372h1v1h-1zM540,359h1v1h-1zM540,346h1v1h-1zM540,333h1v1h-1zM540,320h1v1h-1zM540,307h1v1h-1zM540,294h1v1h-1zM540,281h1v1h-1zM540,268h1v1h-1zM540,255h1v1h-1zM540,242h1v1h-1zM540,230h1v1h-1zM540,217h1v1h-1zM540,204h1v1h-1zM540,191h1v1h-1zM540,178h1v1h-1zM540,165h1v1h-1zM540,152h1v1h-1zM540,139h1v1h-1zM540,126h1v1h-1zM540,113h1v1h-1zM540,100h1v1h-1zM540,88h1v1h-1zM540,75h1v1h-1zM540,62h1v1h-1zM540,49h1v1h-1zM553,591h1v1h-1zM553,578h1v1h-1zM553,565h1v1h-1zM553,552h1v1h-1zM553,539h1v1h-1zM553,527h1v1h-1zM553,514h1v1h-1zM553,501h1v1h-1zM553,488h1v1h-1zM553,475h1v1h-1zM553,462h1v1h-1zM553,449h1v1h-1zM553,436h1v1h-1zM553,423h1v1h-1zM553,410h1v1h-1zM553,397h1v1h-1zM553,385h1v1h-1zM553,372h1v1h-1zM553,359h1v1h-1zM553,346h1v1h-1zM553,333h1v1h-1zM553,320h1v1h-1zM553,307h1v1h-1zM553,294h1v1h-1zM553,281h1v1h-1zM553,268h1v1h-1zM553,255h1v1h-1zM553,242h1v1h-1zM553,230h1v1h-1zM553,217h1v1h-1zM553,204h1v1h-1zM553,191h1v1h-1zM553,178h1v1h-1zM553,165h1v1h-1zM553,152h1v1h-1zM553,139h1v1h-1zM553,126h1v1h-1zM553,113h1v1h-1zM553,100h1v1h-1zM553,88h1v1h-1zM553,75h1v1h-1zM553,62h1v1h-1zM553,49h1v1h-1zM566,591h1v1h-1zM566,578h1v1h-1zM566,565h1v1h-1zM566,552h1v1h-1zM566,539h1v1h-1zM566,527h1v1h-1zM566,514h1v1h-1zM566,501h1v1h-1zM566,488h1v1h-1zM566,475h1v1h-1zM566,462h1v1h-1zM566,449h1v1h-1zM566,436h1v1h-1zM566,423h1v1h-1zM566,410h1v1h-1zM566,397h1v1h-1zM566,385h1v1h-1zM566,372h1v1h-1zM566,359h1v1h-1zM566,346h1v1h-1zM566,333h1v1h-1zM566,320h1v1h-1zM566,307h1v1h-1zM566,294h1v1h-1zM566,281h1v1h-1zM566,268h1v1h-1zM566,255h1v1h-1zM566,242h1v1h-1zM566,230h1v1h-1zM566,217h1v1h-1zM566,204h1v1h-1zM566,191h1v1h-1zM566,178h1v1h-1zM566,165h1v1h-1zM566,152h1v1h-1zM566,139h1v1h-1zM566,126h1v1h-1zM566,113h1v1h-1zM566,100h1v1h-1zM566,88h1v1h-1zM566,75h1v1h-1zM566,62h1v1h-1zM566,49h1v1h-1zM579,591h1v1h-1zM579,578h1v1h-1zM579,565h1v1h-1zM579,552h1v1h-1zM579,539h1v1h-1zM579,527h1v1h-1zM579,514h1v1h-1zM579,501h1v1h-1zM579,488h1v1h-1zM579,475h1v1h-1zM579,462h1v1h-1zM579,449h1v1h-1zM579,436h1v1h-1zM579,423h1v1h-1zM579,410h1v1h-1zM579,397h1v1h-1zM579,385h1v1h-1zM579,372h1v1h-1zM579,359h1v1h-1zM579,346h1v1h-1zM579,333h1v1h-1zM579,320h1v1h-1zM579,307h1v1h-1zM579,294h1v1h-1zM579,281h1v1h-1zM579,268h1v1h-1zM579,255h1v1h-1zM579,242h1v1h-1zM579,230h1v1h-1zM579,217h1v1h-1zM579,204h1v1h-1zM579,191h1v1h-1zM579,178h1v1h-1zM579,165h1v1h-1zM579,152h1v1h-1zM579,139h1v1h-1zM579,126h1v1h-1zM579,113h1v1h-1zM579,100h1v1h-1zM579,88h1v1h-1zM579,75h1v1h-1zM579,62h1v1h-1zM579,49h1v1h-1zM592,591h1v1h-1zM592,578h1v1h-1zM592,565h1v1h-1zM592,552h1v1h-1zM592,539h1v1h-1zM592,527h1v1h-1zM592,514h1v1h-1zM592,501h1v1h-1zM592,488h1v1h-1zM592,475h1v1h-1zM592,462h1v1h-1zM592,449h1v1h-1zM592,436h1v1h-1zM592,423h1v1h-1zM592,410h1v1h-1zM592,397h1v1h-1zM592,385h1v1h-1zM592,372h1v1h-1zM592,359h1v1h-1zM592,346h1v1h-1zM592,333h1v1h-1zM592,320h1v1h-1zM592,307h1v1h-1zM592,294h1v1h-1zM592,281h1v1h-1zM592,268h1v1h-1zM592,255h1v1h-1zM592,242h1v1h-1zM592,230h1v1h-1zM592,217h1v1h-1zM592,204h1v1h-1zM592,191h1v1h-1zM592,178h1v1h-1zM592,165h1v1h-1zM592,152h1v1h-1zM592,139h1v1h-1zM592,126h1v1h-1zM592,113h1v1h-1zM592,100h1v1h-1zM592,88h1v1h-1zM592,75h1v1h-1zM592,62h1v1h-1zM592,49h1v1h-1zM605,591h1v1h-1zM605,578h1v1h-1zM605,565h1v1h-1zM605,552h1v1h-1zM605,539h1v1h-1zM605,527h1v1h-1zM605,514h1v1h-1zM605,501h1v1h-1zM605,488h1v1h-1zM605,475h1v1h-1zM605,462h1v1h-1zM605,449h1v1h-1zM605,436h1v1h-1zM605,423h1v1h-1zM605,410h1v1h-1zM605,397h1v1h-1zM605,385h1v1h-1zM605,372h1v1h-1zM605,359h1v1h-1zM605,346h1v1h-1zM605,333h1v1h-1zM605,320h1v1h-1zM605,307h1v1h-1zM605,294h1v1h-1zM605,281h1v1h-1zM605,268h1v1h-1zM605,255h1v1h-1zM605,242h1v1h-1zM605,230h1v1h-1zM605,217h1v1h-1zM605,204h1v1h-1zM605,191h1v1h-1zM605,178h1v1h-1zM605,165h1v1h-1zM605,152h1v1h-1zM605,139h1v1h-1zM605,126h1v1h-1zM605,113h1v1h-1zM605,100h1v1h-1zM605,88h1v1h-1zM605,75h1v1h-1zM605,62h1v1h-1zM605,49h1v1h-1zM618,591h1v1h-1zM618,578h1v1h-1zM618,565h1v1h-1zM618,552h1v1h-1zM618,539h1v1h-1zM618,527h1v1h-1zM618,514h1v1h-1zM618,501h1v1h-1zM618,488h1v1h-1zM618,475h1v1h-1zM618,462h1v1h-1zM618,449h1v1h-1zM618,436h1v1h-1zM618,423h1v1h-1zM618,410h1v1h-1zM618,397h1v1h-1zM618,385h1v1h-1zM618,372h1v1h-1zM618,359h1v1h-1zM618,346h1v1h-1zM618,333h1v1h-1zM618,320h1v1h-1zM618,307h1v1h-1zM618,294h1v1h-1zM618,281h1v1h-1zM618,268h1v1h-1zM618,255h1v1h-1zM618,242h1v1h-1zM618,230h1v1h-1zM618,217h1v1h-1zM618,204h1v1h-1zM618,191h1v1h-1zM618,178h1v1h-1zM618,165h1v1h-1zM618,152h1v1h-1zM618,139h1v1h-1zM618,126h1v1h-1zM618,113h1v1h-1zM618,100h1v1h-1zM618,88h1v1h-1zM618,75h1v1h-1zM618,62h1v1h-1zM618,49h1v1h-1zM630,591h1v1h-1zM630,578h1v1h-1zM630,565h1v1h-1zM630,552h1v1h-1zM630,539h1v1h-1zM630,527h1v1h-1zM630,514h1v1h-1zM630,501h1v1h-1zM630,488h1v1h-1zM630,475h1v1h-1zM630,462h1v1h-1zM630,449h1v1h-1zM630,436h1v1h-1zM630,423h1v1h-1zM630,410h1v1h-1zM630,397h1v1h-1zM630,385h1v1h-1zM630,372h1v1h-1zM630,359h1v1h-1zM630,346h1v1h-1zM630,333h1v1h-1zM630,320h1v1h-1zM630,307h1v1h-1zM630,294h1v1h-1zM630,281h1v1h-1zM630,268h1v1h-1zM630,255h1v1h-1zM630,242h1v1h-1zM630,230h1v1h-1zM630,217h1v1h-1zM630,204h1v1h-1zM630,191h1v1h-1zM630,178h1v1h-1zM630,165h1v1h-1zM630,152h1v1h-1zM630,139h1v1h-1zM630,126h1v1h-1zM630,113h1v1h-1zM630,100h1v1h-1zM630,88h1v1h-1zM630,75h1v1h-1zM630,62h1v1h-1zM630,49h1v1h-1zM643,591h1v1h-1zM643,578h1v1h-1zM643,565h1v1h-1zM643,552h1v1h-1zM643,539h1v1h-1zM643,527h1v1h-1zM643,514h1v1h-1zM643,501h1v1h-1zM643,488h1v1h-1zM643,475h1v1h-1zM643,462h1v1h-1zM643,449h1v1h-1zM643,436h1v1h-1zM643,423h1v1h-1zM643,410h1v1h-1zM643,397h1v1h-1zM643,385h1v1h-1zM643,372h1v1h-1zM643,359h1v1h-1zM643,346h1v1h-1zM643,333h1v1h-1zM643,320h1v1h-1zM643,307h1v1h-1zM643,294h1v1h-1zM643,281h1v1h-1zM643,268h1v1h-1zM643,255h1v1h-1zM643,242h1v1h-1zM643,230h1v1h-1zM643,217h1v1h-1zM643,204h1v1h-1zM643,191h1v1h-1zM643,178h1v1h-1zM643,165h1v1h-1zM643,152h1v1h-1zM643,139h1v1h-1zM643,126h1v1h-1zM643,113h1v1h-1zM643,100h1v1h-1zM643,88h1v1h-1zM643,75h1v1h-1zM643,62h1v1h-1zM643,49h1v1h-1zM656,591h1v1h-1zM656,578h1v1h-1zM656,565h1v1h-1zM656,552h1v1h-1zM656,539h1v1h-1zM656,527h1v1h-1zM656,514h1v1h-1zM656,501h1v1h-1zM656,488h1v1h-1zM656,475h1v1h-1zM656,462h1v1h-1zM656,449h1v1h-1zM656,436h1v1h-1zM656,423h1v1h-1zM656,410h1v1h-1zM656,397h1v1h-1zM656,385h1v1h-1zM656,372h1v1h-1zM656,359h1v1h-1zM656,346h1v1h-1zM656,333h1v1h-1zM656,320h1v1h-1zM656,307h1v1h-1zM656,294h1v1h-1zM656,281h1v1h-1zM656,268h1v1h-1zM656,255h1v1h-1zM656,242h1v1h-1zM656,230h1v1h-1zM656,217h1v1h-1zM656,204h1v1h-1zM656,191h1v1h-1zM656,178h1v1h-1zM656,165h1v1h-1zM656,152h1v1h-1zM656,139h1v1h-1zM656,126h1v1h-1zM656,113h1v1h-1zM656,100h1v1h-1zM656,88h1v1h-1zM656,75h1v1h-1zM656,62h1v1h-1zM656,49h1v1h-1zM669,591h1v1h-1zM669,578h1v1h-1zM669,565h1v1h-1zM669,552h1v1h-1zM669,539h1v1h-1zM669,527h1v1h-1zM669,514h1v1h-1zM669,501h1v1h-1zM669,488h1v1h-1zM669,475h1v1h-1zM669,462h1v1h-1zM669,449h1v1h-1zM669,436h1v1h-1zM669,423h1v1h-1zM669,410h1v1h-1zM669,397h1v1h-1zM669,385h1v1h-1zM669,372h1v1h-1zM669,359h1v1h-1zM669,346h1v1h-1zM669,333h1v1h-1zM669,320h1v1h-1zM669,307h1v1h-1zM669,294h1v1h-1zM669,281h1v1h-1zM669,268h1v1h-1zM669,255h1v1h-1zM669,242h1v1h-1zM669,230h1v1h-1zM669,217h1v1h-1zM669,204h1v1h-1zM669,191h1v1h-1zM669,178h1v1h-1zM669,165h1v1h-1zM669,152h1v1h-1zM669,139h1v1h-1zM669,126h1v1h-1zM669,113h1v1h-1zM669,100h1v1h-1zM669,88h1v1h-1zM669,75h1v1h-1zM669,62h1v1h-1zM669,49h1v1h-1zM682,591h1v1h-1zM682,578h1v1h-1zM682,565h1v1h-1zM682,552h1v1h-1zM682,539h1v1h-1zM682,527h1v1h-1zM682,514h1v1h-1zM682,501h1v1h-1zM682,488h1v1h-1zM682,475h1v1h-1zM682,462h1v1h-1zM682,449h1v1h-1zM682,436h1v1h-1zM682,423h1v1h-1zM682,410h1v1h-1zM682,397h1v1h-1zM682,385h1v1h-1zM682,372h1v1h-1zM682,359h1v1h-1zM682,346h1v1h-1zM682,333h1v1h-1zM682,320h1v1h-1zM682,307h1v1h-1zM682,294h1v1h-1zM682,281h1v1h-1zM682,268h1v1h-1zM682,255h1v1h-1zM682,242h1v1h-1zM682,230h1v1h-1zM682,217h1v1h-1zM682,204h1v1h-1zM682,191h1v1h-1zM682,178h1v1h-1zM682,165h1v1h-1zM682,152h1v1h-1zM682,139h1v1h-1zM682,126h1v1h-1zM682,113h1v1h-1zM682,100h1v1h-1zM682,88h1v1h-1zM682,75h1v1h-1zM682,62h1v1h-1zM682,49h1v1h-1zM695,591h1v1h-1zM695,578h1v1h-1zM695,565h1v1h-1zM695,552h1v1h-1zM695,539h1v1h-1zM695,527h1v1h-1zM695,514h1v1h-1zM695,501h1v1h-1zM695,488h1v1h-1zM695,475h1v1h-1zM695,462h1v1h-1zM695,449h1v1h-1zM695,436h1v1h-1zM695,423h1v1h-1zM695,410h1v1h-1zM695,397h1v1h-1zM695,385h1v1h-1zM695,372h1v1h-1zM695,359h1v1h-1zM695,346h1v1h-1zM695,333h1v1h-1zM695,320h1v1h-1zM695,307h1v1h-1zM695,294h1v1h-1zM695,281h1v1h-1zM695,268h1v1h-1zM695,255h1v1h-1zM695,242h1v1h-1zM695,230h1v1h-1zM695,217h1v1h-1zM695,204h1v1h-1zM695,191h1v1h-1zM695,178h1v1h-1zM695,165h1v1h-1zM695,152h1v1h-1zM695,139h1v1h-1zM695,126h1v1h-1zM695,113h1v1h-1zM695,100h1v1h-1zM695,88h1v1h-1zM695,75h1v1h-1zM695,62h1v1h-1zM695,49h1v1h-1zM708,591h1v1h-1zM708,578h1v1h-1zM708,565h1v1h-1zM708,552h1v1h-1zM708,539h1v1h-1zM708,527h1v1h-1zM708,514h1v1h-1zM708,501h1v1h-1zM708,488h1v1h-1zM708,475h1v1h-1zM708,462h1v1h-1zM708,449h1v1h-1zM708,436h1v1h-1zM708,423h1v1h-1zM708,410h1v1h-1zM708,397h1v1h-1zM708,385h1v1h-1zM708,372h1v1h-1zM708,359h1v1h-1zM708,346h1v1h-1zM708,333h1v1h-1zM708,320h1v1h-1zM708,307h1v1h-1zM708,294h1v1h-1zM708,281h1v1h-1zM708,268h1v1h-1zM708,255h1v1h-1zM708,242h1v1h-1zM708,230h1v1h-1zM708,217h1v1h-1zM708,204h1v1h-1zM708,191h1v1h-1zM708,178h1v1h-1zM708,165h1v1h-1zM708,152h1v1h-1zM708,139h1v1h-1zM708,126h1v1h-1zM708,113h1v1h-1zM708,100h1v1h-1zM708,88h1v1h-1zM708,75h1v1h-1zM708,62h1v1h-1zM708,49h1v1h-1zM721,591h1v1h-1zM721,578h1v1h-1zM721,565h1v1h-1zM721,552h1v1h-1zM721,539h1v1h-1zM721,527h1v1h-1zM721,514h1v1h-1zM721,501h1v1h-1zM721,488h1v1h-1zM721,475h1v1h-1zM721,462h1v1h-1zM721,449h1v1h-1zM721,436h1v1h-1zM721,423h1v1h-1zM721,410h1v1h-1zM721,397h1v1h-1zM721,385h1v1h-1zM721,372h1v1h-1zM721,359h1v1h-1zM721,346h1v1h-1zM721,333h1v1h-1zM721,320h1v1h-1zM721,307h1v1h-1zM721,294h1v1h-1zM721,281h1v1h-1zM721,268h1v1h-1zM721,255h1v1h-1zM721,242h1v1h-1zM721,230h1v1h-1zM721,217h1v1h-1zM721,204h1v1h-1zM721,191h1v1h-1zM721,178h1v1h-1zM721,165h1v1h-1zM721,152h1v1h-1zM721,139h1v1h-1zM721,126h1v1h-1zM721,113h1v1h-1zM721,100h1v1h-1zM721,88h1v1h-1zM721,75h1v1h-1zM721,62h1v1h-1zM721,49h1v1h-1zM734,591h1v1h-1zM734,578h1v1h-1zM734,565h1v1h-1zM734,552h1v1h-1zM734,539h1v1h-1zM734,527h1v1h-1zM734,514h1v1h-1zM734,501h1v1h-1zM734,488h1v1h-1zM734,475h1v1h-1zM734,462h1v1h-1zM734,449h1v1h-1zM734,436h1v1h-1zM734,423h1v1h-1zM734,410h1v1h-1zM734,397h1v1h-1zM734,385h1v1h-1zM734,372h1v1h-1zM734,359h1v1h-1zM734,346h1v1h-1zM734,333h1v1h-1zM734,320h1v1h-1zM734,307h1v1h-1zM734,294h1v1h-1zM734,281h1v1h-1zM734,268h1v1h-1zM734,255h1v1h-1zM734,242h1v1h-1zM734,230h1v1h-1zM734,217h1v1h-1zM734,204h1v1h-1zM734,191h1v1h-1zM734,178h1v1h-1zM734,165h1v1h-1zM734,152h1v1h-1zM734,139h1v1h-1zM734,126h1v1h-1zM734,113h1v1h-1zM734,100h1v1h-1zM734,88h1v1h-1zM734,75h1v1h-1zM734,62h1v1h-1zM734,49h1v1h-1zM747,591h1v1h-1zM747,578h1v1h-1zM747,565h1v1h-1zM747,552h1v1h-1zM747,539h1v1h-1zM747,527h1v1h-1zM747,514h1v1h-1zM747,501h1v1h-1zM747,488h1v1h-1zM747,475h1v1h-1zM747,462h1v1h-1zM747,449h1v1h-1zM747,436h1v1h-1zM747,423h1v1h-1zM747,410h1v1h-1zM747,397h1v1h-1zM747,385h1v1h-1zM747,372h1v1h-1zM747,359h1v1h-1zM747,346h1v1h-1zM747,333h1v1h-1zM747,320h1v1h-1zM747,307h1v1h-1zM747,294h1v1h-1zM747,281h1v1h-1zM747,268h1v1h-1zM747,255h1v1h-1zM747,242h1v1h-1zM747,230h1v1h-1zM747,217h1v1h-1zM747,204h1v1h-1zM747,191h1v1h-1zM747,178h1v1h-1zM747,165h1v1h-1zM747,152h1v1h-1zM747,139h1v1h-1zM747,126h1v1h-1zM747,113h1v1h-1zM747,100h1v1h-1zM747,88h1v1h-1zM747,75h1v1h-1zM747,62h1v1h-1zM747,49h1v1h-1zM760,591h1v1h-1zM760,578h1v1h-1zM760,565h1v1h-1zM760,552h1v1h-1zM760,539h1v1h-1zM760,527h1v1h-1zM760,514h1v1h-1zM760,501h1v1h-1zM760,488h1v1h-1zM760,475h1v1h-1zM760,462h1v1h-1zM760,449h1v1h-1zM760,436h1v1h-1zM760,423h1v1h-1zM760,410h1v1h-1zM760,397h1v1h-1zM760,385h1v1h-1zM760,372h1v1h-1zM760,359h1v1h-1zM760,346h1v1h-1zM760,333h1v1h-1zM760,320h1v1h-1zM760,307h1v1h-1zM760,294h1v1h-1zM760,281h1v1h-1zM760,268h1v1h-1zM760,255h1v1h-1zM760,242h1v1h-1zM760,230h1v1h-1zM760,217h1v1h-1zM760,204h1v1h-1zM760,191h1v1h-1zM760,178h1v1h-1zM760,165h1v1h-1zM760,152h1v1h-1zM760,139h1v1h-1zM760,126h1v1h-1zM760,113h1v1h-1zM760,100h1v1h-1zM760,88h1v1h-1zM760,75h1v1h-1zM760,62h1v1h-1zM760,49h1v1h-1zM773,591h1v1h-1zM773,578h1v1h-1zM773,565h1v1h-1zM773,552h1v1h-1zM773,539h1v1h-1zM773,527h1v1h-1zM773,514h1v1h-1zM773,501h1v1h-1zM773,488h1v1h-1zM773,475h1v1h-1zM773,462h1v1h-1zM773,449h1v1h-1zM773,436h1v1h-1zM773,423h1v1h-1zM773,410h1v1h-1zM773,397h1v1h-1zM773,385h1v1h-1zM773,372h1v1h-1zM773,359h1v1h-1zM773,346h1v1h-1zM773,333h1v1h-1zM773,320h1v1h-1zM773,307h1v1h-1zM773,294h1v1h-1zM773,281h1v1h-1zM773,268h1v1h-1zM773,255h1v1h-1zM773,242h1v1h-1zM773,230h1v1h-1zM773,217h1v1h-1zM773,204h1v1h-1zM773,191h1v1h-1zM773,178h1v1h-1zM773,165h1v1h-1zM773,152h1v1h-1zM773,139h1v1h-1zM773,126h1v1h-1zM773,113h1v1h-1zM773,100h1v1h-1zM773,88h1v1h-1zM773,75h1v1h-1zM773,62h1v1h-1zM773,49h1v1h-1zM785,591h1v1h-1zM785,578h1v1h-1zM785,565h1v1h-1zM785,552h1v1h-1zM785,539h1v1h-1zM785,527h1v1h-1zM785,514h1v1h-1zM785,501h1v1h-1zM785,488h1v1h-1zM785,475h1v1h-1zM785,462h1v1h-1zM785,449h1v1h-1zM785,436h1v1h-1zM785,423h1v1h-1zM785,410h1v1h-1zM785,397h1v1h-1zM785,385h1v1h-1zM785,372h1v1h-1zM785,359h1v1h-1zM785,346h1v1h-1zM785,333h1v1h-1zM785,320h1v1h-1zM785,307h1v1h-1zM785,294h1v1h-1zM785,281h1v1h-1zM785,268h1v1h-1zM785,255h1v1h-1zM785,242h1v1h-1zM785,230h1v1h-1zM785,217h1v1h-1zM785,204h1v1h-1zM785,191h1v1h-1zM785,178h1v1h-1zM785,165h1v1h-1zM785,152h1v1h-1zM785,139h1v1h-1zM785,126h1v1h-1zM785,113h1v1h-1zM785,100h1v1h-1zM785,88h1v1h-1zM785,75h1v1h-1zM785,62h1v1h-1zM785,49h1v1h-1zM798,591h1v1h-1zM798,578h1v1h-1zM798,565h1v1h-1zM798,552h1v1h-1zM798,539h1v1h-1zM798,527h1v1h-1zM798,514h1v1h-1zM798,501h1v1h-1zM798,488h1v1h-1zM798,475h1v1h-1zM798,462h1v1h-1zM798,449h1v1h-1zM798,436h1v1h-1zM798,423h1v1h-1zM798,410h1v1h-1zM798,397h1v1h-1zM798,385h1v1h-1zM798,372h1v1h-1zM798,359h1v1h-1zM798,346h1v1h-1zM798,333h1v1h-1zM798,320h1v1h-1zM798,307h1v1h-1zM798,294h1v1h-1zM798,281h1v1h-1zM798,268h1v1h-1zM798,255h1v1h-1zM798,242h1v1h-1zM798,230h1v1h-1zM798,217h1v1h-1zM798,204h1v1h-1zM798,191h1v1h-1zM798,178h1v1h-1zM798,165h1v1h-1zM798,152h1v1h-1zM798,139h1v1h-1zM798,126h1v1h-1zM798,113h1v1h-1zM798,100h1v1h-1zM798,88h1v1h-1zM798,75h1v1h-1zM798,62h1v1h-1zM798,49h1v1h-1z" fill="#4a4a4a"/><rect x="24" y="48" width="1" height="552" fill="#3f3f3f"/><rect x="4" y="591" width="800" height="1" fill="#3f3f3f"/><rect x="24" y="565" width="42" height="1" fill="#00ccee"/><rect x="272" y="565" width="514" height="1" fill="#00ccee"/><path d="M78,546 H91.7 L104.5,559 L117.5,546 H131 L112,565.7 L131,585.5 H117.5 L104.5,573 L91.7,585.5 H78 L97,565.7 Z" fill="#bb2200"/><g filter="url(#gs)"><text x="129.89" y="578.8" font-size="32.7" textLength="120.45" lengthAdjust="spacingAndGlyphs" fill="#cccccc">SCHEM</text><text x="279.11" y="561" font-size="12.5" textLength="99.57" lengthAdjust="spacingAndGlyphs" fill="#cccccc">Stefan Schippers</text><text x="279.70" y="579.3" font-size="11" textLength="183.37" lengthAdjust="spacingAndGlyphs" fill="#cccccc">/mnt/x/home/schippes/x/rlc.sch</text></g><rect x="146" y="229" width="1" height="18" fill="#88dd00"/><rect x="140" y="246" width="14" height="1" fill="#88dd00"/><rect x="140" y="252" width="14" height="1" fill="#88dd00"/><rect x="146" y="252" width="1" height="18" fill="#88dd00"/><rect x="148" y="234" width="4" height="1" fill="#88dd00"/><rect x="149" y="233" width="1" height="4" fill="#88dd00"/><path d="M141,303h1v1h-1zM141,304h1v1h-1zM141,305h1v1h-1zM141,308h1v1h-1zM141,309h1v1h-1zM141,313h1v1h-1zM141,314h1v1h-1zM141,317h1v1h-1zM141,318h1v1h-1zM141,319h1v1h-1zM141,322h1v1h-1zM141,323h1v1h-1zM141,324h1v1h-1zM142,302h1v1h-1zM142,305h1v1h-1zM142,306h1v1h-1zM142,310h1v1h-1zM142,312h1v1h-1zM142,315h1v1h-1zM142,316h1v1h-1zM142,320h1v1h-1zM142,321h1v1h-1zM142,325h1v1h-1zM143,301h1v1h-1zM143,306h1v1h-1zM143,311h1v1h-1zM143,316h1v1h-1zM143,321h1v1h-1zM143,326h1v1h-1zM144,301h1v1h-1zM144,307h1v1h-1zM144,310h1v1h-1zM144,312h1v1h-1zM144,315h1v1h-1zM144,320h1v1h-1zM144,326h1v1h-1zM145,300h1v1h-1zM145,305h1v1h-1zM145,307h1v1h-1zM145,310h1v1h-1zM145,312h1v1h-1zM145,315h1v1h-1zM145,317h1v1h-1zM145,320h1v1h-1zM145,322h1v1h-1zM145,327h1v1h-1zM146,297h1v1h-1zM146,298h1v1h-1zM146,299h1v1h-1zM146,300h1v1h-1zM146,305h1v1h-1zM146,308h1v1h-1zM146,309h1v1h-1zM146,313h1v1h-1zM146,314h1v1h-1zM146,317h1v1h-1zM146,319h1v1h-1zM146,322h1v1h-1zM146,327h1v1h-1zM146,328h1v1h-1zM146,329h1v1h-1zM146,330h1v1h-1zM147,304h1v1h-1zM147,308h1v1h-1zM147,309h1v1h-1zM147,313h1v1h-1zM147,317h1v1h-1zM147,318h1v1h-1zM147,319h1v1h-1zM147,322h1v1h-1zM148,304h1v1h-1zM148,307h1v1h-1zM148,308h1v1h-1zM148,312h1v1h-1zM148,317h1v1h-1zM148,318h1v1h-1zM148,322h1v1h-1zM149,304h1v1h-1zM149,307h1v1h-1zM149,309h1v1h-1zM149,312h1v1h-1zM149,313h1v1h-1zM149,317h1v1h-1zM149,318h1v1h-1zM149,322h1v1h-1zM150,304h1v1h-1zM150,307h1v1h-1zM150,309h1v1h-1zM150,310h1v1h-1zM150,312h1v1h-1zM150,314h1v1h-1zM150,317h1v1h-1zM150,319h1v1h-1zM150,322h1v1h-1zM151,305h1v1h-1zM151,306h1v1h-1zM151,310h1v1h-1zM151,311h1v1h-1zM151,315h1v1h-1zM151,316h1v1h-1zM151,320h1v1h-1zM151,321h1v1h-1z" fill="#88dd00"/><rect x="149" y="298" width="5" height="1" fill="#88dd00"/><rect x="151" y="296" width="1" height="5" fill="#88dd00"/><path d="M277,302h1v1h-1zM277,309h1v1h-1zM277,315h1v1h-1zM277,322h1v1h-1zM278,302h1v1h-1zM278,309h1v1h-1zM278,315h1v1h-1zM278,322h1v1h-1zM279,302h1v1h-1zM279,303h1v1h-1zM279,308h1v1h-1zM279,310h1v1h-1zM279,314h1v1h-1zM279,316h1v1h-1zM279,321h1v1h-1zM279,323h1v1h-1zM280,301h1v1h-1zM280,303h1v1h-1zM280,308h1v1h-1zM280,310h1v1h-1zM280,314h1v1h-1zM280,316h1v1h-1zM280,321h1v1h-1zM280,323h1v1h-1zM281,301h1v1h-1zM281,303h1v1h-1zM281,307h1v1h-1zM281,310h1v1h-1zM281,314h1v1h-1zM281,316h1v1h-1zM281,320h1v1h-1zM281,323h1v1h-1zM282,297h1v1h-1zM282,298h1v1h-1zM282,299h1v1h-1zM282,300h1v1h-1zM282,301h1v1h-1zM282,304h1v1h-1zM282,307h1v1h-1zM282,311h1v1h-1zM282,314h1v1h-1zM282,317h1v1h-1zM282,320h1v1h-1zM282,324h1v1h-1zM282,326h1v1h-1zM282,327h1v1h-1zM282,328h1v1h-1zM282,329h1v1h-1zM282,330h1v1h-1zM282,331h1v1h-1zM283,304h1v1h-1zM283,307h1v1h-1zM283,311h1v1h-1zM283,313h1v1h-1zM283,317h1v1h-1zM283,320h1v1h-1zM283,324h1v1h-1zM283,326h1v1h-1zM284,304h1v1h-1zM284,306h1v1h-1zM284,311h1v1h-1zM284,313h1v1h-1zM284,317h1v1h-1zM284,319h1v1h-1zM284,324h1v1h-1zM284,326h1v1h-1zM285,304h1v1h-1zM285,306h1v1h-1zM285,311h1v1h-1zM285,313h1v1h-1zM285,317h1v1h-1zM285,319h1v1h-1zM285,324h1v1h-1zM285,325h1v1h-1zM286,305h1v1h-1zM286,312h1v1h-1zM286,318h1v1h-1zM286,325h1v1h-1zM287,305h1v1h-1zM287,312h1v1h-1zM287,318h1v1h-1zM287,325h1v1h-1z" fill="#88dd00"/><rect x="283" y="299" width="5" height="1" fill="#88dd00"/><rect x="285" y="297" width="1" height="5" fill="#88dd00"/><rect x="146" y="359" width="1" height="39" fill="#88dd00"/><path d="M136,375h1v1h-1zM136,376h1v1h-1zM136,377h1v1h-1zM136,378h1v1h-1zM136,379h1v1h-1zM136,380h1v1h-1zM136,381h1v1h-1zM137,373h1v1h-1zM137,374h1v1h-1zM137,382h1v1h-1zM137,383h1v1h-1zM138,372h1v1h-1zM138,384h1v1h-1zM139,371h1v1h-1zM139,385h1v1h-1zM140,370h1v1h-1zM140,386h1v1h-1zM141,369h1v1h-1zM141,387h1v1h-1zM142,369h1v1h-1zM142,387h1v1h-1zM143,368h1v1h-1zM143,388h1v1h-1zM144,368h1v1h-1zM144,388h1v1h-1zM145,368h1v1h-1zM145,388h1v1h-1zM146,368h1v1h-1zM146,388h1v1h-1zM147,368h1v1h-1zM147,388h1v1h-1zM148,368h1v1h-1zM148,388h1v1h-1zM149,368h1v1h-1zM149,388h1v1h-1zM150,369h1v1h-1zM150,387h1v1h-1zM151,369h1v1h-1zM151,387h1v1h-1zM152,370h1v1h-1zM152,386h1v1h-1zM153,371h1v1h-1zM153,385h1v1h-1zM154,372h1v1h-1zM154,384h1v1h-1zM155,373h1v1h-1zM155,374h1v1h-1zM155,382h1v1h-1zM155,383h1v1h-1zM156,375h1v1h-1zM156,376h1v1h-1zM156,377h1v1h-1zM156,378h1v1h-1zM156,379h1v1h-1zM156,380h1v1h-1zM156,381h1v1h-1z" fill="#88dd00"/><rect x="133" y="365" width="8" height="1" fill="#88dd00"/><rect x="136" y="362" width="1" height="7" fill="#88dd00"/><rect x="145" y="228" width="4" height="4" fill="#bb2200"/><rect x="145" y="267" width="4" height="4" fill="#bb2200"/><rect x="145" y="292" width="4" height="5" fill="#bb2200"/><rect x="145" y="331" width="4" height="4" fill="#bb2200"/><rect x="280" y="292" width="4" height="5" fill="#bb2200"/><rect x="280" y="331" width="4" height="4" fill="#bb2200"/><rect x="145" y="357" width="4" height="4" fill="#bb2200"/><rect x="145" y="396" width="4" height="4" fill="#bb2200"/><rect x="145" y="280" width="3" height="3" fill="#bb2200"/><rect x="145" y="345" width="3" height="3" fill="#bb2200"/><rect x="281" y="203" width="3" height="3" fill="#bb2200"/><rect x="281" y="435" width="3" height="3" fill="#bb2200"/><rect x="146" y="204" width="1" height="27" fill="#00ccee"/><rect x="146" y="269" width="1" height="26" fill="#00ccee"/><rect x="146" y="333" width="1" height="26" fill="#00ccee"/><rect x="146" y="397" width="1" height="40" fill="#00ccee"/><rect x="146" y="204" width="137" height="1" fill="#00ccee"/><rect x="146" y="436" width="137" height="1" fill="#00ccee"/><rect x="282" y="204" width="1" height="91" fill="#00ccee"/><rect x="282" y="333" width="1" height="104" fill="#00ccee"/><g filter="url(#gs)"><text x="286.98" y="209" font-size="11.6" textLength="8.05" lengthAdjust="spacingAndGlyphs" fill="#00ccee">A</text><text x="151.08" y="286" font-size="11.6" textLength="7.52" lengthAdjust="spacingAndGlyphs" fill="#00ccee">B</text><text x="151.02" y="351" font-size="11.6" textLength="8.21" lengthAdjust="spacingAndGlyphs" fill="#00ccee">C</text><text x="286.49" y="441" font-size="11.6" textLength="7.21" lengthAdjust="spacingAndGlyphs" fill="#00ccee">0</text></g><g filter="url(#gs)"><text x="155.52" y="243" font-size="7.3" textLength="9.57" lengthAdjust="spacingAndGlyphs" fill="#cccccc">C0</text><text x="155.60" y="252" font-size="7.3" textLength="17.20" lengthAdjust="spacingAndGlyphs" fill="#cccccc">50nF</text><text x="155.42" y="261" font-size="7.3" textLength="14.34" lengthAdjust="spacingAndGlyphs" fill="#cccccc">m=1</text><text x="152.33" y="308.5" font-size="7.3" textLength="6.58" lengthAdjust="spacingAndGlyphs" fill="#cccccc">l1</text><text x="152.83" y="319" font-size="7.3" textLength="19.98" lengthAdjust="spacingAndGlyphs" fill="#cccccc">10mH</text><text x="290.15" y="307" font-size="7.3" textLength="10.05" lengthAdjust="spacingAndGlyphs" fill="#cccccc">R0</text><text x="290.66" y="317" font-size="7.3" textLength="7.53" lengthAdjust="spacingAndGlyphs" fill="#cccccc">1k</text><text x="290.31" y="327" font-size="7.3" textLength="14.55" lengthAdjust="spacingAndGlyphs" fill="#cccccc">m=1</text><text x="158.40" y="373" font-size="7.3" textLength="8.96" lengthAdjust="spacingAndGlyphs" fill="#cccccc">E1</text><text x="159.24" y="383.5" font-size="7.3" textLength="89.82" lengthAdjust="spacingAndGlyphs" fill="#cccccc">'3*cos(time*time*time*1e11)'</text><text x="142.65" y="236" font-size="4" textLength="2.58" lengthAdjust="spacingAndGlyphs" fill="#bbbbbb">1</text><text x="142.78" y="265" font-size="4" textLength="2.44" lengthAdjust="spacingAndGlyphs" fill="#bbbbbb">2</text><text x="276.65" y="300" font-size="4" textLength="2.58" lengthAdjust="spacingAndGlyphs" fill="#bbbbbb">1</text><text x="276.78" y="329" font-size="4" textLength="2.44" lengthAdjust="spacingAndGlyphs" fill="#bbbbbb">2</text></g><g filter="url(#gs)"><text x="388.04" y="358" font-size="10.8" textLength="40.10" lengthAdjust="spacingAndGlyphs" fill="#cccccc">STIMULI</text></g><path d="M385.5,365.5 H443.5 V430.5 H385.5 Z M443.5,372.5 H450.5 V436.5 H392.5 V430.5" stroke="#bb2200" stroke-width="1" fill="none"/><rect x="392" y="372" width="13" height="1" fill="#cccccc"/><rect x="392" y="378" width="33" height="1" fill="#cccccc"/><rect x="392" y="384" width="26" height="1" fill="#cccccc"/><rect x="392" y="391" width="13" height="1" fill="#cccccc"/><rect x="392" y="397" width="26" height="1" fill="#cccccc"/><rect x="392" y="404" width="20" height="1" fill="#cccccc"/><rect x="392" y="410" width="20" height="1" fill="#cccccc"/><rect x="392" y="417" width="46" height="1" fill="#cccccc"/><rect x="392" y="423" width="13" height="1" fill="#cccccc"/><rect x="4" y="600" width="800" height="19" fill="#d9d9d9"/><rect x="4" y="600" width="800" height="1" fill="#e4e4e4"/><rect x="4" y="618" width="800" height="1" fill="#e4e4e4"/><rect x="4" y="600" width="1" height="19" fill="#e4e4e4"/><rect x="803" y="600" width="1" height="19" fill="#e4e4e4"/><rect x="38" y="601" width="64" height="17" fill="#98fb98"/><rect x="38" y="601" width="64" height="1" fill="#5b965b"/><rect x="38" y="601" width="1" height="17" fill="#5b965b"/><rect x="39" y="617" width="63" height="1" fill="#c8ffc8"/><rect x="101" y="602" width="1" height="16" fill="#c8ffc8"/><rect x="137" y="601" width="64" height="17" fill="#98fb98"/><rect x="137" y="601" width="64" height="1" fill="#5b965b"/><rect x="137" y="601" width="1" height="17" fill="#5b965b"/><rect x="138" y="617" width="63" height="1" fill="#c8ffc8"/><rect x="200" y="602" width="1" height="16" fill="#c8ffc8"/><rect x="284" y="601" width="64" height="17" fill="#d9d9d9"/><rect x="284" y="601" width="64" height="1" fill="#828282"/><rect x="284" y="601" width="1" height="17" fill="#828282"/><rect x="285" y="617" width="63" height="1" fill="#ffffff"/><rect x="347" y="602" width="1" height="16" fill="#ffffff"/><text x="5.85" y="613" font-size="11.6" textLength="29.97" lengthAdjust="spacingAndGlyphs" fill="#000">SNAP:</text><text x="39.68" y="613" font-size="11.6" textLength="11.94" lengthAdjust="spacingAndGlyphs" fill="#000">10</text><text x="104.65" y="613" font-size="11.6" textLength="30.24" lengthAdjust="spacingAndGlyphs" fill="#000">GRID:</text><text x="138.82" y="613" font-size="11.6" textLength="12.72" lengthAdjust="spacingAndGlyphs" fill="#000">20</text><text x="203.47" y="613" font-size="11.6" textLength="77.96" lengthAdjust="spacingAndGlyphs" fill="#000">NETLIST MODE:</text><text x="285.58" y="613" font-size="11.6" textLength="27.04" lengthAdjust="spacingAndGlyphs" fill="#000">spice</text><text x="350.45" y="613" font-size="11.6" textLength="128.19" lengthAdjust="spacingAndGlyphs" fill="#000">mouse = 50 -590 - rlc.sch</text><text x="484.09" y="613" font-size="11.6" textLength="53.95" lengthAdjust="spacingAndGlyphs" fill="#000">selected: 0</text></svg></body></html>
